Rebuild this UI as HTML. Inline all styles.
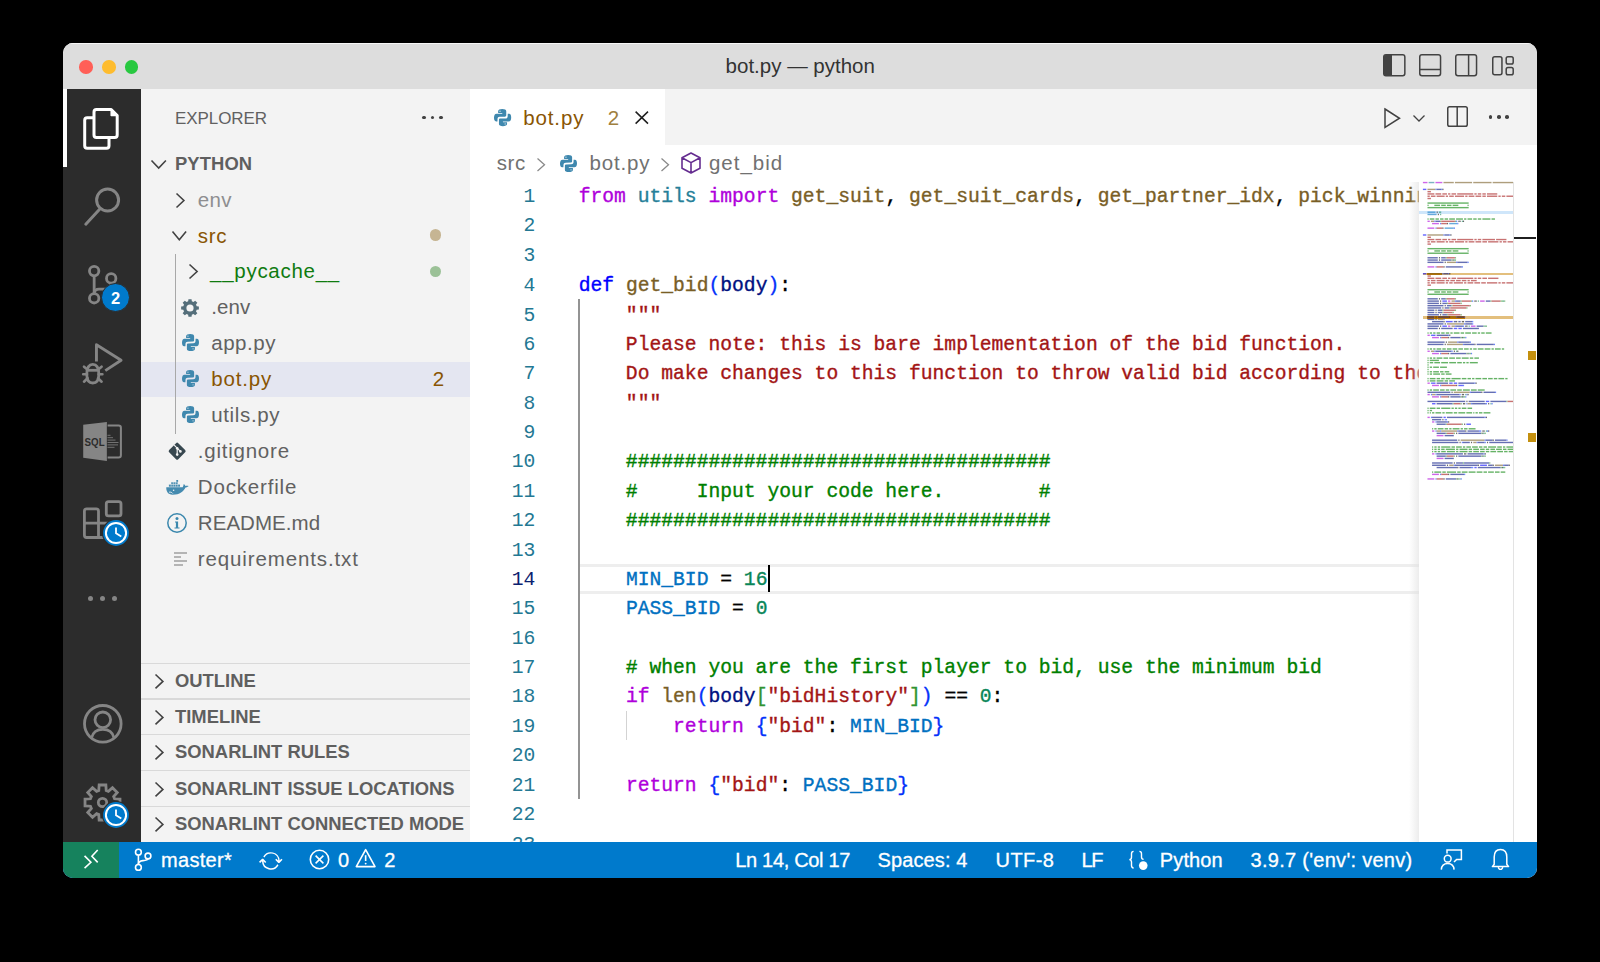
<!DOCTYPE html>
<html><head><meta charset="utf-8">
<style>
*{margin:0;padding:0;box-sizing:border-box}
html,body{width:1600px;height:962px;background:#000;overflow:hidden}
body{font-family:"Liberation Sans",sans-serif;position:relative}
.a{position:absolute}
.win{position:absolute;left:63px;top:43px;width:1474px;height:835px;border-radius:10px;overflow:hidden;background:#fff}
.pg{position:absolute;left:-63px;top:-43px;width:1600px;height:962px}
.t{position:absolute;white-space:pre;line-height:1}
.code{font-family:"Liberation Mono",monospace;white-space:pre;position:absolute}
svg{position:absolute;overflow:visible}
.k{color:#af00db}.m{color:#267f99}.f{color:#795e26}.d{color:#0000ff}.b1{color:#0431fa}.b2{color:#319331}.b3{color:#7b3814}
.v{color:#001080}.s{color:#a31515}.c{color:#008000}.n{color:#098658}.cn{color:#0070c1}.o{color:#000}
</style></head><body>
<div class="win"><div class="pg">

<div class="a" style="left:63px;top:43px;width:1474px;height:46px;background:#dddddd;"></div>
<div class="a" style="left:63px;top:89px;width:78px;height:753px;background:#2c2c2c;"></div>
<div class="a" style="left:141px;top:89px;width:329px;height:753px;background:#f3f3f3;"></div>
<div class="a" style="left:470px;top:89px;width:1067px;height:753px;background:#ffffff;"></div>
<div class="a" style="left:470px;top:89px;width:1067px;height:56px;background:#f3f3f3;"></div>
<div class="a" style="left:470px;top:89px;width:195px;height:56px;background:#ffffff;"></div>
<div class="a" style="left:63px;top:43px;width:1474px;height:1.2px;background:#f7f7f7;"></div>
<div class="a" style="left:79.35px;top:60.05px;width:13.5px;height:13.5px;border-radius:50%;background:#ff5f57"></div>
<div class="a" style="left:102.15px;top:60.05px;width:13.5px;height:13.5px;border-radius:50%;background:#febc2e"></div>
<div class="a" style="left:124.65px;top:60.05px;width:13.5px;height:13.5px;border-radius:50%;background:#28c840"></div>
<div class="t" style="left:725.60px;top:55.75px;font-size:20.5px;color:#333333;font-family:'Liberation Sans';">bot.py — python</div>
<div class="a" style="left:578px;top:564px;width:841px;height:30px;border:3px solid #eeeeee;border-right:none;border-left:none"></div>
<div class="a" style="left:577.5px;top:299.0px;width:2px;height:499.79999999999995px;background:#939393;"></div>
<div class="a" style="left:625.5px;top:710.5999999999999px;width:1.3px;height:29.43px;background:#d3d3d3;"></div>
<div class="code" style="left:578.70px;top:183.160px;font-size:19.6635px;line-height:27.3767px;color:#000;transform:scaleY(1.075);transform-origin:0 0;-webkit-text-stroke:0.35px currentColor"><span class="k">from</span><span class="o"> </span><span class="m">utils</span><span class="o"> </span><span class="k">import</span><span class="o"> </span><span class="f">get_suit</span><span class="o">, </span><span class="f">get_suit_cards</span><span class="o">, </span><span class="f">get_partner_idx</span><span class="o">, </span><span class="f">pick_winning_card_idx</span><span class="o">, </span><span class="f">is_high</span>
 
 
<span class="d">def</span><span class="o"> </span><span class="f">get_bid</span><span class="b1">(</span><span class="v">body</span><span class="b1">)</span><span class="o">:</span>
<span class="s">    &quot;&quot;&quot;</span>
<span class="s">    Please note: this is bare implementation of the bid function.</span>
<span class="s">    Do make changes to this function to throw valid bid according to the context of the game.</span>
<span class="s">    &quot;&quot;&quot;</span>
 
<span class="c">    ####################################</span>
<span class="c">    #     Input your code here.        #</span>
<span class="c">    ####################################</span>
 
<span class="o">    </span><span class="cn">MIN_BID</span><span class="o"> = </span><span class="n">16</span>
<span class="o">    </span><span class="cn">PASS_BID</span><span class="o"> = </span><span class="n">0</span>
 
<span class="c">    # when you are the first player to bid, use the minimum bid</span>
<span class="o">    </span><span class="k">if</span><span class="o"> </span><span class="f">len</span><span class="b1">(</span><span class="v">body</span><span class="b2">[</span><span class="s">&quot;bidHistory&quot;</span><span class="b2">]</span><span class="b1">)</span><span class="o"> == </span><span class="n">0</span><span class="o">:</span>
<span class="o">        </span><span class="k">return</span><span class="o"> </span><span class="b1">{</span><span class="s">&quot;bid&quot;</span><span class="o">: </span><span class="cn">MIN_BID</span><span class="b1">}</span>
 
<span class="o">    </span><span class="k">return</span><span class="o"> </span><span class="b1">{</span><span class="s">&quot;bid&quot;</span><span class="o">: </span><span class="cn">PASS_BID</span><span class="b1">}</span>
 
 </div>
<div class="code" style="left:469.3px;width:66px;text-align:right;top:183.160px;font-size:19.6635px;line-height:27.3767px;transform:scaleY(1.075);transform-origin:0 0"><span style="color:#237893">1</span>
<span style="color:#237893">2</span>
<span style="color:#237893">3</span>
<span style="color:#237893">4</span>
<span style="color:#237893">5</span>
<span style="color:#237893">6</span>
<span style="color:#237893">7</span>
<span style="color:#237893">8</span>
<span style="color:#237893">9</span>
<span style="color:#237893">10</span>
<span style="color:#237893">11</span>
<span style="color:#237893">12</span>
<span style="color:#237893">13</span>
<span style="color:#0b216f">14</span>
<span style="color:#237893">15</span>
<span style="color:#237893">16</span>
<span style="color:#237893">17</span>
<span style="color:#237893">18</span>
<span style="color:#237893">19</span>
<span style="color:#237893">20</span>
<span style="color:#237893">21</span>
<span style="color:#237893">22</span>
<span style="color:#237893">23</span></div>
<div class="a" style="left:767.6px;top:564.6px;width:2px;height:27.43px;background:#000000;"></div>
<div class="t" style="left:175.00px;top:109.61px;font-size:17px;color:#616161;letter-spacing:-0.073px;font-family:'Liberation Sans';">EXPLORER</div>
<div class="a" style="left:422.45px;top:115.55px;width:3.5px;height:3.5px;border-radius:50%;background:#424242"></div>
<div class="a" style="left:430.85px;top:115.55px;width:3.5px;height:3.5px;border-radius:50%;background:#424242"></div>
<div class="a" style="left:439.25px;top:115.55px;width:3.5px;height:3.5px;border-radius:50%;background:#424242"></div>
<svg style="left:150.6px;top:160.2px;" width="15.4" height="8.6" viewBox="0 0 15.4 8.6"><path d="M0.5 0.5 L7.7 8.1 L14.9 0.5" fill="none" stroke="#424242" stroke-width="1.6"/></svg>
<div class="t" style="left:175.00px;top:154.72px;font-size:18.4px;color:#5f5f5f;font-weight:bold;letter-spacing:0.088px;font-family:'Liberation Sans';">PYTHON</div>
<div class="a" style="left:141px;top:361.9px;width:329px;height:35.4px;background:#e4e6f1;"></div>
<div class="a" style="left:174.5px;top:253.6px;width:1.2px;height:180.1px;background:#a8a8a8;"></div>
<svg style="left:176.2px;top:193.2px;" width="8.4" height="15" viewBox="0 0 8.4 15"><path d="M0.5 0.5 L7.9 7.5 L0.5 14.5" fill="none" stroke="#424242" stroke-width="1.6"/></svg>
<div class="t" style="left:197.80px;top:189.65px;font-size:20.5px;color:#8e8e90;letter-spacing:0.316px;font-family:'Liberation Sans';">env</div>
<svg style="left:172px;top:231.3px;" width="14.6" height="9.2" viewBox="0 0 14.6 9.2"><path d="M0.5 0.5 L7.3 8.7 L14.1 0.5" fill="none" stroke="#424242" stroke-width="1.6"/></svg>
<div class="t" style="left:197.80px;top:225.55px;font-size:20.5px;color:#895503;letter-spacing:0.658px;font-family:'Liberation Sans';">src</div>
<div class="a" style="left:429.80px;top:229.25px;width:11.6px;height:11.6px;border-radius:50%;background:#c6b593"></div>
<svg style="left:189px;top:264.2px;" width="8.6" height="15" viewBox="0 0 8.6 15"><path d="M0.5 0.5 L8.1 7.5 L0.5 14.5" fill="none" stroke="#424242" stroke-width="1.6"/></svg>
<div class="t" style="left:210.00px;top:261.45px;font-size:20.5px;color:#0f7b0f;letter-spacing:0.731px;font-family:'Liberation Sans';">__pycache__</div>
<div class="a" style="left:429.80px;top:265.50px;width:11.6px;height:11.6px;border-radius:50%;background:#9bc197"></div>
<svg style="left:181.2px;top:298.5px;" width="18" height="18" viewBox="0 0 18 18"><polygon points="7.16,2.35 7.45,0.13 10.55,0.13 10.84,2.35 12.40,3.00 14.18,1.64 16.36,3.82 15.00,5.60 15.65,7.16 17.87,7.45 17.87,10.55 15.65,10.84 15.00,12.40 16.36,14.18 14.18,16.36 12.40,15.00 10.84,15.65 10.55,17.87 7.45,17.87 7.16,15.65 5.60,15.00 3.82,16.36 1.64,14.18 3.00,12.40 2.35,10.84 0.13,10.55 0.13,7.45 2.35,7.16 3.00,5.60 1.64,3.82 3.82,1.64 5.60,3.00" fill="#546e7a"/><circle cx="9" cy="9" r="3.6" fill="#f3f3f3"/></svg>
<div class="t" style="left:211.20px;top:297.35px;font-size:20.5px;color:#616161;letter-spacing:0.138px;font-family:'Liberation Sans';">.env</div>
<svg style="left:181.9px;top:334.0px;" width="17" height="17" viewBox="0 0 16 16"><path d="M3.85 2 C3.85 0.7 5.5 0 7.7 0 C10 0 11.4 0.7 11.4 2 L11.4 5.9 C11.4 6.6 10.8 7.1 10.1 7.1 L5.3 7.2 C4.1 7.2 3.3 8 3.3 9.1 L3.2 11.6 L2 11.6 C0.6 11.6 0 10 0 8.2 C0 5.9 0.8 4.4 2.4 4.4 L7.7 4.4 L7.7 3.7 L3.85 3.7 Z" fill="#3f88ae"/><circle cx="5.6" cy="2.1" r="0.6" fill="#f3f3f3" opacity="0.8"/><g transform="rotate(180 8 8)"><path d="M3.85 2 C3.85 0.7 5.5 0 7.7 0 C10 0 11.4 0.7 11.4 2 L11.4 5.9 C11.4 6.6 10.8 7.1 10.1 7.1 L5.3 7.2 C4.1 7.2 3.3 8 3.3 9.1 L3.2 11.6 L2 11.6 C0.6 11.6 0 10 0 8.2 C0 5.9 0.8 4.4 2.4 4.4 L7.7 4.4 L7.7 3.7 L3.85 3.7 Z" fill="#3f88ae"/><circle cx="5.6" cy="2.1" r="0.6" fill="#f3f3f3" opacity="0.8"/></g></svg>
<div class="t" style="left:211.20px;top:333.25px;font-size:20.5px;color:#616161;letter-spacing:0.542px;font-family:'Liberation Sans';">app.py</div>
<svg style="left:181.9px;top:369.9px;" width="17" height="17" viewBox="0 0 16 16"><path d="M3.85 2 C3.85 0.7 5.5 0 7.7 0 C10 0 11.4 0.7 11.4 2 L11.4 5.9 C11.4 6.6 10.8 7.1 10.1 7.1 L5.3 7.2 C4.1 7.2 3.3 8 3.3 9.1 L3.2 11.6 L2 11.6 C0.6 11.6 0 10 0 8.2 C0 5.9 0.8 4.4 2.4 4.4 L7.7 4.4 L7.7 3.7 L3.85 3.7 Z" fill="#3f88ae"/><circle cx="5.6" cy="2.1" r="0.6" fill="#e4e6f1" opacity="0.8"/><g transform="rotate(180 8 8)"><path d="M3.85 2 C3.85 0.7 5.5 0 7.7 0 C10 0 11.4 0.7 11.4 2 L11.4 5.9 C11.4 6.6 10.8 7.1 10.1 7.1 L5.3 7.2 C4.1 7.2 3.3 8 3.3 9.1 L3.2 11.6 L2 11.6 C0.6 11.6 0 10 0 8.2 C0 5.9 0.8 4.4 2.4 4.4 L7.7 4.4 L7.7 3.7 L3.85 3.7 Z" fill="#3f88ae"/><circle cx="5.6" cy="2.1" r="0.6" fill="#e4e6f1" opacity="0.8"/></g></svg>
<div class="t" style="left:211.20px;top:369.15px;font-size:20.5px;color:#895503;letter-spacing:0.859px;font-family:'Liberation Sans';">bot.py</div>
<div class="t" style="left:432.80px;top:369.15px;font-size:20.5px;color:#895503;letter-spacing:-0.901px;font-family:'Liberation Sans';">2</div>
<svg style="left:181.9px;top:405.8px;" width="17" height="17" viewBox="0 0 16 16"><path d="M3.85 2 C3.85 0.7 5.5 0 7.7 0 C10 0 11.4 0.7 11.4 2 L11.4 5.9 C11.4 6.6 10.8 7.1 10.1 7.1 L5.3 7.2 C4.1 7.2 3.3 8 3.3 9.1 L3.2 11.6 L2 11.6 C0.6 11.6 0 10 0 8.2 C0 5.9 0.8 4.4 2.4 4.4 L7.7 4.4 L7.7 3.7 L3.85 3.7 Z" fill="#3f88ae"/><circle cx="5.6" cy="2.1" r="0.6" fill="#f3f3f3" opacity="0.8"/><g transform="rotate(180 8 8)"><path d="M3.85 2 C3.85 0.7 5.5 0 7.7 0 C10 0 11.4 0.7 11.4 2 L11.4 5.9 C11.4 6.6 10.8 7.1 10.1 7.1 L5.3 7.2 C4.1 7.2 3.3 8 3.3 9.1 L3.2 11.6 L2 11.6 C0.6 11.6 0 10 0 8.2 C0 5.9 0.8 4.4 2.4 4.4 L7.7 4.4 L7.7 3.7 L3.85 3.7 Z" fill="#3f88ae"/><circle cx="5.6" cy="2.1" r="0.6" fill="#f3f3f3" opacity="0.8"/></g></svg>
<div class="t" style="left:211.20px;top:405.05px;font-size:20.5px;color:#616161;letter-spacing:0.65px;font-family:'Liberation Sans';">utils.py</div>
<svg style="left:167.9px;top:441.8px;" width="18.3" height="18.3" viewBox="0 0 18.3 18.3"><rect x="2.7" y="2.7" width="12.9" height="12.9" rx="1.6" transform="rotate(45 9.15 9.15)" fill="#37474f"/><path d="M6.2 3.2 L9.2 6.2 M9.2 6.2 L9.2 12.6 M9.2 6.2 L12.4 9.4" stroke="#f3f3f3" stroke-width="1.2" fill="none"/><circle cx="9.2" cy="6.2" r="1.3" fill="#f3f3f3"/><circle cx="9.2" cy="12.6" r="1.3" fill="#f3f3f3"/><circle cx="12.4" cy="9.4" r="1.3" fill="#f3f3f3"/></svg>
<div class="t" style="left:197.80px;top:440.95px;font-size:20.5px;color:#616161;letter-spacing:0.767px;font-family:'Liberation Sans';">.gitignore</div>
<svg style="left:166.1px;top:479.8px;" width="22.7" height="14.7" viewBox="0 0 22.7 14.7"><path d="M0.3 7.2 L16.7 7.2 C17.3 6.3 17.4 5.2 17.8 4 C18.8 4.6 19.3 5.3 19.4 5.9 C20.3 5.7 21.5 5.8 22.7 5.9 C21.5 6.9 20.5 7.3 19.5 7.5 C17.5 11.5 14 14.7 6.6 14.7 C2 14.7 0 11 0.3 7.2 Z" fill="#458bb0"/><rect x="2.9" y="4.4" width="11.1" height="2.3" fill="#458bb0"/><rect x="5.2" y="2.1" width="6.5" height="2.1" fill="#458bb0"/><rect x="10.3" y="0" width="1.8" height="2" fill="#458bb0"/><path d="M5.1 4.3 V6.8 M7.3 4.3 V6.8 M9.5 4.3 V6.8 M11.8 4.3 V6.8 M7.4 2 V4.3 M9.5 2 V4.3 M2.8 4.3 H14.1 M5.1 2.05 H11.8" stroke="#f3f3f3" stroke-width="0.45"/><circle cx="7.6" cy="10.3" r="0.8" fill="#f3f3f3"/><path d="M3 12.2 C4.5 11.8 6 12.4 6.8 13.6" stroke="#e8eef2" stroke-width="0.9" fill="none"/></svg>
<div class="t" style="left:197.80px;top:476.85px;font-size:20.5px;color:#616161;letter-spacing:0.826px;font-family:'Liberation Sans';">Dockerfile</div>
<svg style="left:167.2px;top:512.8px;" width="20" height="20" viewBox="0 0 20 20"><circle cx="10" cy="10" r="9.2" fill="none" stroke="#3a87ad" stroke-width="1.5"/><circle cx="10" cy="5.5" r="1.5" fill="#3a87ad"/><path d="M8 8.5 L11.1 8.5 L11.1 14.4 L12.5 14.4 L12.5 15.6 L7.5 15.6 L7.5 14.4 L8.9 14.4 L8.9 9.6 L8 9.6 Z" fill="#3a87ad"/></svg>
<div class="t" style="left:197.80px;top:512.75px;font-size:20.5px;color:#616161;letter-spacing:0.058px;font-family:'Liberation Sans';">README.md</div>
<div class="a" style="left:174.1px;top:552.1px;width:12.7px;height:1.6px;background:#b4b4b4;"></div>
<div class="a" style="left:174.1px;top:556.25px;width:6.8px;height:1.6px;background:#b4b4b4;"></div>
<div class="a" style="left:174.1px;top:560.2px;width:12.7px;height:1.6px;background:#b4b4b4;"></div>
<div class="a" style="left:174.1px;top:564.35px;width:9.2px;height:1.6px;background:#b4b4b4;"></div>
<div class="t" style="left:197.80px;top:548.65px;font-size:20.5px;color:#616161;letter-spacing:0.877px;font-family:'Liberation Sans';">requirements.txt</div>
<div class="a" style="left:141px;top:662.8px;width:329px;height:1.3px;background:#d9d9d9;"></div>
<svg style="left:154.6px;top:674.1999999999999px;" width="8.4" height="14.8" viewBox="0 0 8.4 14.8"><path d="M0.5 0.5 L7.9 7.4 L0.5 14.3" fill="none" stroke="#424242" stroke-width="1.6"/></svg>
<div class="t" style="left:175.00px;top:672.22px;font-size:18.4px;color:#5f5f5f;font-weight:bold;font-family:'Liberation Sans';">OUTLINE</div>
<div class="a" style="left:141px;top:698.3px;width:329px;height:1.3px;background:#d9d9d9;"></div>
<svg style="left:154.6px;top:709.6999999999999px;" width="8.4" height="14.8" viewBox="0 0 8.4 14.8"><path d="M0.5 0.5 L7.9 7.4 L0.5 14.3" fill="none" stroke="#424242" stroke-width="1.6"/></svg>
<div class="t" style="left:175.00px;top:707.72px;font-size:18.4px;color:#5f5f5f;font-weight:bold;font-family:'Liberation Sans';">TIMELINE</div>
<div class="a" style="left:141px;top:734.0px;width:329px;height:1.3px;background:#d9d9d9;"></div>
<svg style="left:154.6px;top:745.4px;" width="8.4" height="14.8" viewBox="0 0 8.4 14.8"><path d="M0.5 0.5 L7.9 7.4 L0.5 14.3" fill="none" stroke="#424242" stroke-width="1.6"/></svg>
<div class="t" style="left:175.00px;top:743.42px;font-size:18.4px;color:#5f5f5f;font-weight:bold;font-family:'Liberation Sans';">SONARLINT RULES</div>
<div class="a" style="left:141px;top:770.1px;width:329px;height:1.3px;background:#d9d9d9;"></div>
<svg style="left:154.6px;top:781.5px;" width="8.4" height="14.8" viewBox="0 0 8.4 14.8"><path d="M0.5 0.5 L7.9 7.4 L0.5 14.3" fill="none" stroke="#424242" stroke-width="1.6"/></svg>
<div class="t" style="left:175.00px;top:779.52px;font-size:18.4px;color:#5f5f5f;font-weight:bold;font-family:'Liberation Sans';">SONARLINT ISSUE LOCATIONS</div>
<div class="a" style="left:141px;top:806.0px;width:329px;height:1.3px;background:#d9d9d9;"></div>
<svg style="left:154.6px;top:817.4px;" width="8.4" height="14.8" viewBox="0 0 8.4 14.8"><path d="M0.5 0.5 L7.9 7.4 L0.5 14.3" fill="none" stroke="#424242" stroke-width="1.6"/></svg>
<div class="t" style="left:175.00px;top:815.42px;font-size:18.4px;color:#5f5f5f;font-weight:bold;font-family:'Liberation Sans';">SONARLINT CONNECTED MODE</div>
<svg style="left:493.9px;top:108.8px;" width="17.2" height="17.2" viewBox="0 0 16 16"><path d="M3.85 2 C3.85 0.7 5.5 0 7.7 0 C10 0 11.4 0.7 11.4 2 L11.4 5.9 C11.4 6.6 10.8 7.1 10.1 7.1 L5.3 7.2 C4.1 7.2 3.3 8 3.3 9.1 L3.2 11.6 L2 11.6 C0.6 11.6 0 10 0 8.2 C0 5.9 0.8 4.4 2.4 4.4 L7.7 4.4 L7.7 3.7 L3.85 3.7 Z" fill="#3f88ae"/><circle cx="5.6" cy="2.1" r="0.6" fill="#ffffff" opacity="0.8"/><g transform="rotate(180 8 8)"><path d="M3.85 2 C3.85 0.7 5.5 0 7.7 0 C10 0 11.4 0.7 11.4 2 L11.4 5.9 C11.4 6.6 10.8 7.1 10.1 7.1 L5.3 7.2 C4.1 7.2 3.3 8 3.3 9.1 L3.2 11.6 L2 11.6 C0.6 11.6 0 10 0 8.2 C0 5.9 0.8 4.4 2.4 4.4 L7.7 4.4 L7.7 3.7 L3.85 3.7 Z" fill="#3f88ae"/><circle cx="5.6" cy="2.1" r="0.6" fill="#ffffff" opacity="0.8"/></g></svg>
<div class="t" style="left:523.30px;top:107.65px;font-size:20.5px;color:#895503;letter-spacing:0.859px;font-family:'Liberation Sans';">bot.py</div>
<div class="t" style="left:607.80px;top:107.65px;font-size:20.5px;color:#a0803e;letter-spacing:-1.001px;font-family:'Liberation Sans';">2</div>
<svg style="left:635px;top:110.7px;" width="13.6" height="13.2" viewBox="0 0 13.6 13.2"><path d="M0.6 0.6 L13 12.6 M13 0.6 L0.6 12.6" stroke="#1f1f1f" stroke-width="1.5" fill="none"/></svg>
<svg style="left:1384px;top:108px;" width="16.5" height="20.5" viewBox="0 0 16.5 20.5"><path d="M1 1 L15.5 10.25 L1 19.5 Z" fill="none" stroke="#424242" stroke-width="1.5" stroke-linejoin="miter"/></svg>
<svg style="left:1413px;top:114.5px;" width="12" height="6.5" viewBox="0 0 12 6.5"><path d="M0.5 0.5 L6 6 L11.5 0.5" fill="none" stroke="#424242" stroke-width="1.3"/></svg>
<svg style="left:1447px;top:106px;" width="21" height="21" viewBox="0 0 21 21"><rect x="0.75" y="0.75" width="19.5" height="19.5" rx="1.8" fill="none" stroke="#424242" stroke-width="1.5"/><path d="M10.2 0.75 V20.25" stroke="#424242" stroke-width="1.5"/></svg>
<div class="a" style="left:1488.85px;top:115.45px;width:3.5px;height:3.5px;border-radius:50%;background:#424242"></div>
<div class="a" style="left:1497.00px;top:115.45px;width:3.5px;height:3.5px;border-radius:50%;background:#424242"></div>
<div class="a" style="left:1505.25px;top:115.45px;width:3.5px;height:3.5px;border-radius:50%;background:#424242"></div>
<div class="t" style="left:496.80px;top:153.35px;font-size:20.5px;color:#717171;letter-spacing:0.524px;font-family:'Liberation Sans';">src</div>
<svg style="left:536.6px;top:158.3px;" width="8" height="13.4" viewBox="0 0 8 13.4"><path d="M0.5 0.5 L7.5 6.7 L0.5 12.9" fill="none" stroke="#8a8a8a" stroke-width="1.3"/></svg>
<svg style="left:560.3px;top:155.0px;" width="17.0" height="17.0" viewBox="0 0 16 16"><path d="M3.85 2 C3.85 0.7 5.5 0 7.7 0 C10 0 11.4 0.7 11.4 2 L11.4 5.9 C11.4 6.6 10.8 7.1 10.1 7.1 L5.3 7.2 C4.1 7.2 3.3 8 3.3 9.1 L3.2 11.6 L2 11.6 C0.6 11.6 0 10 0 8.2 C0 5.9 0.8 4.4 2.4 4.4 L7.7 4.4 L7.7 3.7 L3.85 3.7 Z" fill="#3f88ae"/><circle cx="5.6" cy="2.1" r="0.6" fill="#ffffff" opacity="0.8"/><g transform="rotate(180 8 8)"><path d="M3.85 2 C3.85 0.7 5.5 0 7.7 0 C10 0 11.4 0.7 11.4 2 L11.4 5.9 C11.4 6.6 10.8 7.1 10.1 7.1 L5.3 7.2 C4.1 7.2 3.3 8 3.3 9.1 L3.2 11.6 L2 11.6 C0.6 11.6 0 10 0 8.2 C0 5.9 0.8 4.4 2.4 4.4 L7.7 4.4 L7.7 3.7 L3.85 3.7 Z" fill="#3f88ae"/><circle cx="5.6" cy="2.1" r="0.6" fill="#ffffff" opacity="0.8"/></g></svg>
<div class="t" style="left:589.60px;top:153.35px;font-size:20.5px;color:#717171;letter-spacing:0.809px;font-family:'Liberation Sans';">bot.py</div>
<svg style="left:661px;top:158.3px;" width="8" height="13.4" viewBox="0 0 8 13.4"><path d="M0.5 0.5 L7.5 6.7 L0.5 12.9" fill="none" stroke="#8a8a8a" stroke-width="1.3"/></svg>
<svg style="left:680.7px;top:151.9px;" width="20" height="22" viewBox="0 0 20 22"><path d="M10 1 L19 5.8 L19 16.2 L10 21 L1 16.2 L1 5.8 Z M1 5.8 L10 10.6 L19 5.8 M10 10.6 L10 21" fill="none" stroke="#652d90" stroke-width="1.6" stroke-linejoin="round"/></svg>
<div class="t" style="left:708.90px;top:153.35px;font-size:20.5px;color:#717171;letter-spacing:1.021px;font-family:'Liberation Sans';">get_bid</div>
<svg style="left:1383px;top:54.4px;" width="22.6" height="22.5" viewBox="0 0 22.6 22.5"><rect x="0.75" y="0.75" width="21.1" height="21" rx="2.2" fill="none" stroke="#424242" stroke-width="1.5"/><path d="M1 2.5 Q1 1 2.5 1 L9 1 L9 21.5 L2.5 21.5 Q1 21.5 1 20 Z" fill="#424242"/></svg>
<svg style="left:1419px;top:54.4px;" width="22.3" height="22.5" viewBox="0 0 22.3 22.5"><rect x="0.75" y="0.75" width="20.8" height="21" rx="2.2" fill="none" stroke="#424242" stroke-width="1.5"/><path d="M0.75 15.6 H21.5" stroke="#424242" stroke-width="1.5"/></svg>
<svg style="left:1455px;top:54.4px;" width="22.3" height="22.5" viewBox="0 0 22.3 22.5"><rect x="0.75" y="0.75" width="20.8" height="21" rx="2.2" fill="none" stroke="#424242" stroke-width="1.5"/><path d="M13.6 0.75 V21.5" stroke="#424242" stroke-width="1.5"/></svg>
<svg style="left:1492px;top:56px;" width="22" height="19.5" viewBox="0 0 22 19.5"><rect x="0.75" y="0.75" width="9.2" height="18" rx="2" fill="none" stroke="#424242" stroke-width="1.5"/><rect x="14.2" y="0.75" width="7" height="7.2" rx="1.8" fill="none" stroke="#424242" stroke-width="1.5"/><rect x="14.2" y="11.6" width="7" height="7.2" rx="1.8" fill="none" stroke="#424242" stroke-width="1.5"/></svg>
<div class="a" style="left:63px;top:89px;width:4px;height:78px;background:#ffffff;"></div>
<svg style="left:80px;top:104px;" width="46" height="50" viewBox="80 104 46 50"><path d="M94 117.7 H87.2 Q84.7 117.7 84.7 120.2 V145.7 Q84.7 148.2 87.2 148.2 H106.5 Q109 148.2 109 145.7 V138.5" fill="none" stroke="#fff" stroke-width="3"/><path d="M111.2 109.5 H96.5 Q94 109.5 94 112 V135 Q94 137.5 96.5 137.5 H114.7 Q117.2 137.5 117.2 135 V115.5 Z" fill="none" stroke="#fff" stroke-width="3" stroke-linejoin="round"/><path d="M111.2 109.5 V115.5 H117.2 Z" fill="#fff" stroke="#fff" stroke-width="1.5" stroke-linejoin="round"/></svg>
<svg style="left:80px;top:180px;" width="50" height="50" viewBox="80 180 50 50"><circle cx="107.6" cy="200" r="11" fill="none" stroke="#858585" stroke-width="3"/><path d="M99.6 209.3 L85.8 224.2" stroke="#858585" stroke-width="3" stroke-linecap="round"/></svg>
<svg style="left:80px;top:258px;" width="50" height="50" viewBox="80 258 50 50"><circle cx="94.16" cy="271.1" r="4.7" fill="none" stroke="#858585" stroke-width="2.8"/><circle cx="94.16" cy="298.3" r="4.7" fill="none" stroke="#858585" stroke-width="2.8"/><circle cx="111.2" cy="278.4" r="4.7" fill="none" stroke="#858585" stroke-width="2.8"/><path d="M94.16 275.8 V293.6" stroke="#858585" stroke-width="2.8"/><path d="M94.16 293 C94.5 290.5 96 289.1 99 289.1 H105 C108.5 289.1 110.5 286.5 110.8 283.1" fill="none" stroke="#858585" stroke-width="2.8"/></svg>
<div class="a" style="left:101.00px;top:283.00px;width:29.40px;height:29.40px;border-radius:50%;background:#007acc;border:1.5px solid #2c2c2c"></div>
<div class="t" style="left:111.10px;top:289.53px;font-size:16.5px;color:#ffffff;font-weight:bold;font-family:'Liberation Sans';">2</div>
<svg style="left:78px;top:336px;" width="50" height="50" viewBox="78 336 50 50"><path d="M96.45 361.5 V344.8 L121.1 360.2 L105.3 370.6" fill="none" stroke="#858585" stroke-width="2.9" stroke-linejoin="round"/><path d="M86.8 374.5 C86.8 368 89 364.3 92.8 364.3 C96.6 364.3 98.8 368 98.8 374.5 C98.8 380 96.5 383 92.8 383 C89.1 383 86.8 380 86.8 374.5 Z" fill="none" stroke="#858585" stroke-width="2.8"/><path d="M86.8 370.3 H98.8" stroke="#858585" stroke-width="2.8"/><path d="M84 366.7 L87.4 369.6 M83.2 374.3 H87 M84 381.7 L87.6 378.2 M101.6 366.7 L98.2 369.6 M102.4 374.3 H98.6 M101.6 381.7 L98 378.2" stroke="#858585" stroke-width="2.6" stroke-linecap="round"/></svg>
<svg style="left:78px;top:416px;" width="50" height="50" viewBox="78 416 50 50"><path d="M107.6 425.4 H118.6 Q120.9 425.4 120.9 427.7 V455.3 Q120.9 457.6 118.6 457.6 H107.6" fill="none" stroke="#858585" stroke-width="2"/><path d="M83.2 424.8 L106.85 422 V461 L83.2 457.8 Z" fill="#858585"/><text x="84.6" y="446.2" font-family="Liberation Sans" font-weight="bold" font-size="11.5" fill="#2c2c2c" textLength="20" lengthAdjust="spacingAndGlyphs">SQL</text><path d="M107.5 435.3 H110.5 M107.5 437.7 H113 M107.5 440.1 H115.5 M107.5 442.5 H118.5 M107.5 444.9 H118 M107.5 447.3 H114.5" stroke="#858585" stroke-width="1" opacity="0.8"/></svg>
<svg style="left:78px;top:494px;" width="54" height="54" viewBox="78 494 54 54"><path d="M98.5 523.2 V537.5 H86.6 Q84.4 537.5 84.4 535.3 V511.1 Q84.4 508.9 86.6 508.9 H96.3 Q98.5 508.9 98.5 511.1 V523.2 H112.8 V537.5 H98.5 M84.4 523.2 H98.5" fill="none" stroke="#858585" stroke-width="2.8"/><rect x="106.3" y="501.6" width="14.7" height="14.3" rx="2.2" fill="none" stroke="#858585" stroke-width="2.8"/></svg>
<svg style="left:100.7px;top:517.7px;" width="30" height="30" viewBox="0 0 30 30"><circle cx="15" cy="15" r="14" fill="#2c2c2c"/><circle cx="15" cy="15" r="12.9" fill="#007acc"/><circle cx="15" cy="15" r="10.1" fill="none" stroke="#fff" stroke-width="2"/><path d="M15 9.4 V15.3 L20.3 18.6" fill="none" stroke="#fff" stroke-width="1.8"/></svg>
<div class="a" style="left:87.65px;top:595.85px;width:5.5px;height:5.5px;border-radius:50%;background:#858585"></div>
<div class="a" style="left:99.65px;top:595.85px;width:5.5px;height:5.5px;border-radius:50%;background:#858585"></div>
<div class="a" style="left:111.85px;top:595.85px;width:5.5px;height:5.5px;border-radius:50%;background:#858585"></div>
<svg style="left:78px;top:698px;" width="50" height="50" viewBox="78 698 50 50"><circle cx="102.8" cy="723.8" r="18.3" fill="none" stroke="#858585" stroke-width="2.8"/><circle cx="102.8" cy="719.8" r="7.8" fill="none" stroke="#858585" stroke-width="2.8"/><path d="M91.6 737.8 C93 731.5 97.5 729.3 102.8 729.3 C108.1 729.3 112.6 731.5 114 737.8" fill="none" stroke="#858585" stroke-width="2.8"/></svg>
<svg style="left:78px;top:778px;" width="54" height="54" viewBox="78 778 54 54"><polygon points="98.78,790.46 99.14,785.02 105.86,785.02 106.22,790.46 108.38,791.36 112.48,787.76 117.24,792.52 113.64,796.62 114.54,798.78 119.98,799.14 119.98,805.86 114.54,806.22 113.64,808.38 117.24,812.48 112.48,817.24 108.38,813.64 106.22,814.54 105.86,819.98 99.14,819.98 98.78,814.54 96.62,813.64 92.52,817.24 87.76,812.48 91.36,808.38 90.46,806.22 85.02,805.86 85.02,799.14 90.46,798.78 91.36,796.62 87.76,792.52 92.52,787.76 96.62,791.36" fill="none" stroke="#858585" stroke-width="2.8" stroke-linejoin="miter"/><circle cx="102.5" cy="802.5" r="4.2" fill="none" stroke="#858585" stroke-width="2.8"/></svg>
<svg style="left:100.7px;top:800.3px;" width="30" height="30" viewBox="0 0 30 30"><circle cx="15" cy="15" r="14" fill="#2c2c2c"/><circle cx="15" cy="15" r="12.9" fill="#007acc"/><circle cx="15" cy="15" r="10.1" fill="none" stroke="#fff" stroke-width="2"/><path d="M15 9.4 V15.3 L20.3 18.6" fill="none" stroke="#fff" stroke-width="1.8"/></svg>
<div class="a" style="left:1419px;top:181.5px;width:118px;height:660.5px;background:#ffffff;"></div>
<div class="a" style="left:1408.7px;top:181.5px;width:10.3px;height:660.5px;background:linear-gradient(to right,rgba(221,221,221,0),rgba(221,221,221,0.55))"></div>
<div class="a" style="left:1419px;top:211.24px;width:94px;height:2.28px;background:#cfe6fb;"></div>
<div class="a" style="left:1422.5px;top:272.6px;width:90.5px;height:2.7px;background:#e3bf7d;"></div>
<div class="a" style="left:1427.48px;top:272.6px;width:14.87px;height:2.7px;background:#c47a00;"></div>
<div class="a" style="left:1422.5px;top:315.92px;width:90.5px;height:2.7px;background:#e3bf7d;"></div>
<div class="a" style="left:1427.48px;top:315.92px;width:37.75px;height:2.7px;background:#c47a00;"></div>
<svg style="left:1419px;top:145px" width="94" height="400" opacity="0.6"><rect x="3.90" y="36.85" width="4.58" height="1.4" fill="#af00db"/><rect x="9.62" y="36.85" width="5.72" height="1.4" fill="#267f99"/><rect x="16.48" y="36.85" width="6.86" height="1.4" fill="#af00db"/><rect x="24.49" y="36.85" width="10.30" height="1.4" fill="#795e26"/><rect x="35.93" y="36.85" width="17.16" height="1.4" fill="#795e26"/><rect x="54.24" y="36.85" width="18.30" height="1.4" fill="#795e26"/><rect x="73.68" y="36.85" width="20.32" height="1.4" fill="#795e26"/><rect x="3.90" y="43.69" width="3.43" height="1.4" fill="#0000ff"/><rect x="8.48" y="43.69" width="8.01" height="1.4" fill="#795e26"/><rect x="16.48" y="43.69" width="1.14" height="1.4" fill="#0431fa"/><rect x="17.63" y="43.69" width="4.58" height="1.4" fill="#001080"/><rect x="22.20" y="43.69" width="1.14" height="1.4" fill="#0431fa"/><rect x="23.35" y="43.69" width="1.14" height="1.4" fill="#000000"/><rect x="8.48" y="45.97" width="3.43" height="1.4" fill="#a31515"/><rect x="8.48" y="48.25" width="6.86" height="1.4" fill="#a31515"/><rect x="16.48" y="48.25" width="5.72" height="1.4" fill="#a31515"/><rect x="23.35" y="48.25" width="4.58" height="1.4" fill="#a31515"/><rect x="29.07" y="48.25" width="2.29" height="1.4" fill="#a31515"/><rect x="32.50" y="48.25" width="4.58" height="1.4" fill="#a31515"/><rect x="38.22" y="48.25" width="16.02" height="1.4" fill="#a31515"/><rect x="55.38" y="48.25" width="2.29" height="1.4" fill="#a31515"/><rect x="58.81" y="48.25" width="3.43" height="1.4" fill="#a31515"/><rect x="63.39" y="48.25" width="3.43" height="1.4" fill="#a31515"/><rect x="67.96" y="48.25" width="10.30" height="1.4" fill="#a31515"/><rect x="8.48" y="50.53" width="2.29" height="1.4" fill="#a31515"/><rect x="11.91" y="50.53" width="4.58" height="1.4" fill="#a31515"/><rect x="17.63" y="50.53" width="8.01" height="1.4" fill="#a31515"/><rect x="26.78" y="50.53" width="2.29" height="1.4" fill="#a31515"/><rect x="30.21" y="50.53" width="4.58" height="1.4" fill="#a31515"/><rect x="35.93" y="50.53" width="9.15" height="1.4" fill="#a31515"/><rect x="46.23" y="50.53" width="2.29" height="1.4" fill="#a31515"/><rect x="49.66" y="50.53" width="5.72" height="1.4" fill="#a31515"/><rect x="56.52" y="50.53" width="5.72" height="1.4" fill="#a31515"/><rect x="63.39" y="50.53" width="3.43" height="1.4" fill="#a31515"/><rect x="67.96" y="50.53" width="10.30" height="1.4" fill="#a31515"/><rect x="79.40" y="50.53" width="2.29" height="1.4" fill="#a31515"/><rect x="82.84" y="50.53" width="3.43" height="1.4" fill="#a31515"/><rect x="87.41" y="50.53" width="6.59" height="1.4" fill="#a31515"/><rect x="8.48" y="52.81" width="3.43" height="1.4" fill="#a31515"/><rect x="8.48" y="57.37" width="41.18" height="1.4" fill="#008000"/><rect x="8.48" y="59.65" width="1.14" height="1.4" fill="#008000"/><rect x="15.34" y="59.65" width="5.72" height="1.4" fill="#008000"/><rect x="22.20" y="59.65" width="4.58" height="1.4" fill="#008000"/><rect x="27.92" y="59.65" width="4.58" height="1.4" fill="#008000"/><rect x="33.64" y="59.65" width="5.72" height="1.4" fill="#008000"/><rect x="48.52" y="59.65" width="1.14" height="1.4" fill="#008000"/><rect x="8.48" y="61.93" width="41.18" height="1.4" fill="#008000"/><rect x="8.48" y="66.49" width="8.01" height="1.4" fill="#0070c1"/><rect x="17.63" y="66.49" width="1.14" height="1.4" fill="#000000"/><rect x="19.92" y="66.49" width="2.29" height="1.4" fill="#098658"/><rect x="8.48" y="68.77" width="9.15" height="1.4" fill="#0070c1"/><rect x="18.77" y="68.77" width="1.14" height="1.4" fill="#000000"/><rect x="21.06" y="68.77" width="1.14" height="1.4" fill="#098658"/><rect x="8.48" y="73.33" width="1.14" height="1.4" fill="#008000"/><rect x="10.76" y="73.33" width="4.58" height="1.4" fill="#008000"/><rect x="16.48" y="73.33" width="3.43" height="1.4" fill="#008000"/><rect x="21.06" y="73.33" width="3.43" height="1.4" fill="#008000"/><rect x="25.64" y="73.33" width="3.43" height="1.4" fill="#008000"/><rect x="30.21" y="73.33" width="5.72" height="1.4" fill="#008000"/><rect x="37.08" y="73.33" width="6.86" height="1.4" fill="#008000"/><rect x="45.08" y="73.33" width="2.29" height="1.4" fill="#008000"/><rect x="48.52" y="73.33" width="4.58" height="1.4" fill="#008000"/><rect x="54.24" y="73.33" width="3.43" height="1.4" fill="#008000"/><rect x="58.81" y="73.33" width="3.43" height="1.4" fill="#008000"/><rect x="63.39" y="73.33" width="8.01" height="1.4" fill="#008000"/><rect x="72.54" y="73.33" width="3.43" height="1.4" fill="#008000"/><rect x="8.48" y="75.61" width="2.29" height="1.4" fill="#af00db"/><rect x="11.91" y="75.61" width="3.43" height="1.4" fill="#795e26"/><rect x="15.34" y="75.61" width="1.14" height="1.4" fill="#0431fa"/><rect x="16.48" y="75.61" width="4.58" height="1.4" fill="#001080"/><rect x="21.06" y="75.61" width="1.14" height="1.4" fill="#319331"/><rect x="22.20" y="75.61" width="13.73" height="1.4" fill="#a31515"/><rect x="35.93" y="75.61" width="1.14" height="1.4" fill="#319331"/><rect x="37.08" y="75.61" width="1.14" height="1.4" fill="#0431fa"/><rect x="39.36" y="75.61" width="1.14" height="1.4" fill="#000000"/><rect x="40.51" y="75.61" width="1.14" height="1.4" fill="#000000"/><rect x="42.80" y="75.61" width="1.14" height="1.4" fill="#098658"/><rect x="43.94" y="75.61" width="1.14" height="1.4" fill="#000000"/><rect x="13.05" y="77.89" width="6.86" height="1.4" fill="#af00db"/><rect x="21.06" y="77.89" width="1.14" height="1.4" fill="#0431fa"/><rect x="22.20" y="77.89" width="5.72" height="1.4" fill="#a31515"/><rect x="27.92" y="77.89" width="1.14" height="1.4" fill="#000000"/><rect x="30.21" y="77.89" width="8.01" height="1.4" fill="#0070c1"/><rect x="38.22" y="77.89" width="1.14" height="1.4" fill="#0431fa"/><rect x="8.48" y="82.45" width="6.86" height="1.4" fill="#af00db"/><rect x="16.48" y="82.45" width="1.14" height="1.4" fill="#0431fa"/><rect x="17.63" y="82.45" width="5.72" height="1.4" fill="#a31515"/><rect x="23.35" y="82.45" width="1.14" height="1.4" fill="#000000"/><rect x="25.64" y="82.45" width="9.15" height="1.4" fill="#0070c1"/><rect x="34.79" y="82.45" width="1.14" height="1.4" fill="#0431fa"/><rect x="3.90" y="89.29" width="3.43" height="1.4" fill="#0000ff"/><rect x="8.48" y="89.29" width="16.02" height="1.4" fill="#795e26"/><rect x="24.49" y="89.29" width="1.14" height="1.4" fill="#0431fa"/><rect x="25.64" y="89.29" width="4.58" height="1.4" fill="#001080"/><rect x="30.21" y="89.29" width="1.14" height="1.4" fill="#0431fa"/><rect x="31.36" y="89.29" width="1.14" height="1.4" fill="#000000"/><rect x="8.48" y="91.57" width="3.43" height="1.4" fill="#a31515"/><rect x="8.48" y="93.85" width="6.86" height="1.4" fill="#a31515"/><rect x="16.48" y="93.85" width="5.72" height="1.4" fill="#a31515"/><rect x="23.35" y="93.85" width="4.58" height="1.4" fill="#a31515"/><rect x="29.07" y="93.85" width="2.29" height="1.4" fill="#a31515"/><rect x="32.50" y="93.85" width="4.58" height="1.4" fill="#a31515"/><rect x="38.22" y="93.85" width="16.02" height="1.4" fill="#a31515"/><rect x="55.38" y="93.85" width="2.29" height="1.4" fill="#a31515"/><rect x="58.81" y="93.85" width="3.43" height="1.4" fill="#a31515"/><rect x="63.39" y="93.85" width="12.58" height="1.4" fill="#a31515"/><rect x="77.12" y="93.85" width="10.30" height="1.4" fill="#a31515"/><rect x="8.48" y="96.13" width="2.29" height="1.4" fill="#a31515"/><rect x="11.91" y="96.13" width="4.58" height="1.4" fill="#a31515"/><rect x="17.63" y="96.13" width="8.01" height="1.4" fill="#a31515"/><rect x="26.78" y="96.13" width="2.29" height="1.4" fill="#a31515"/><rect x="30.21" y="96.13" width="4.58" height="1.4" fill="#a31515"/><rect x="35.93" y="96.13" width="9.15" height="1.4" fill="#a31515"/><rect x="46.23" y="96.13" width="2.29" height="1.4" fill="#a31515"/><rect x="49.66" y="96.13" width="5.72" height="1.4" fill="#a31515"/><rect x="56.52" y="96.13" width="5.72" height="1.4" fill="#a31515"/><rect x="63.39" y="96.13" width="4.58" height="1.4" fill="#a31515"/><rect x="69.11" y="96.13" width="10.30" height="1.4" fill="#a31515"/><rect x="80.55" y="96.13" width="2.29" height="1.4" fill="#a31515"/><rect x="83.98" y="96.13" width="3.43" height="1.4" fill="#a31515"/><rect x="88.56" y="96.13" width="5.44" height="1.4" fill="#a31515"/><rect x="8.48" y="98.41" width="3.43" height="1.4" fill="#a31515"/><rect x="8.48" y="102.97" width="41.18" height="1.4" fill="#008000"/><rect x="8.48" y="105.25" width="1.14" height="1.4" fill="#008000"/><rect x="15.34" y="105.25" width="5.72" height="1.4" fill="#008000"/><rect x="22.20" y="105.25" width="4.58" height="1.4" fill="#008000"/><rect x="27.92" y="105.25" width="4.58" height="1.4" fill="#008000"/><rect x="33.64" y="105.25" width="5.72" height="1.4" fill="#008000"/><rect x="48.52" y="105.25" width="1.14" height="1.4" fill="#008000"/><rect x="8.48" y="107.53" width="41.18" height="1.4" fill="#008000"/><rect x="8.48" y="112.09" width="10.30" height="1.4" fill="#001080"/><rect x="19.92" y="112.09" width="1.14" height="1.4" fill="#000000"/><rect x="22.20" y="112.09" width="4.58" height="1.4" fill="#001080"/><rect x="26.78" y="112.09" width="1.14" height="1.4" fill="#319331"/><rect x="27.92" y="112.09" width="8.01" height="1.4" fill="#a31515"/><rect x="35.93" y="112.09" width="1.14" height="1.4" fill="#319331"/><rect x="8.48" y="114.37" width="10.30" height="1.4" fill="#001080"/><rect x="19.92" y="114.37" width="1.14" height="1.4" fill="#000000"/><rect x="22.20" y="114.37" width="10.30" height="1.4" fill="#001080"/><rect x="32.50" y="114.37" width="1.14" height="1.4" fill="#319331"/><rect x="33.64" y="114.37" width="1.14" height="1.4" fill="#000000"/><rect x="34.79" y="114.37" width="1.14" height="1.4" fill="#098658"/><rect x="35.93" y="114.37" width="1.14" height="1.4" fill="#319331"/><rect x="8.48" y="116.65" width="16.02" height="1.4" fill="#001080"/><rect x="25.64" y="116.65" width="1.14" height="1.4" fill="#000000"/><rect x="27.92" y="116.65" width="9.15" height="1.4" fill="#795e26"/><rect x="37.08" y="116.65" width="1.14" height="1.4" fill="#0431fa"/><rect x="38.22" y="116.65" width="10.30" height="1.4" fill="#001080"/><rect x="48.52" y="116.65" width="1.14" height="1.4" fill="#0431fa"/><rect x="8.48" y="121.21" width="6.86" height="1.4" fill="#af00db"/><rect x="16.48" y="121.21" width="1.14" height="1.4" fill="#0431fa"/><rect x="17.63" y="121.21" width="6.86" height="1.4" fill="#a31515"/><rect x="24.49" y="121.21" width="1.14" height="1.4" fill="#000000"/><rect x="26.78" y="121.21" width="16.02" height="1.4" fill="#001080"/><rect x="42.80" y="121.21" width="1.14" height="1.4" fill="#0431fa"/><rect x="3.90" y="128.05" width="3.43" height="1.4" fill="#0000ff"/><rect x="8.48" y="128.05" width="14.87" height="1.4" fill="#795e26"/><rect x="23.35" y="128.05" width="1.14" height="1.4" fill="#0431fa"/><rect x="24.49" y="128.05" width="4.58" height="1.4" fill="#001080"/><rect x="29.07" y="128.05" width="1.14" height="1.4" fill="#0431fa"/><rect x="30.21" y="128.05" width="1.14" height="1.4" fill="#000000"/><rect x="8.48" y="130.33" width="3.43" height="1.4" fill="#a31515"/><rect x="8.48" y="132.61" width="6.86" height="1.4" fill="#a31515"/><rect x="16.48" y="132.61" width="5.72" height="1.4" fill="#a31515"/><rect x="23.35" y="132.61" width="4.58" height="1.4" fill="#a31515"/><rect x="29.07" y="132.61" width="2.29" height="1.4" fill="#a31515"/><rect x="32.50" y="132.61" width="4.58" height="1.4" fill="#a31515"/><rect x="38.22" y="132.61" width="16.02" height="1.4" fill="#a31515"/><rect x="55.38" y="132.61" width="2.29" height="1.4" fill="#a31515"/><rect x="58.81" y="132.61" width="3.43" height="1.4" fill="#a31515"/><rect x="63.39" y="132.61" width="4.58" height="1.4" fill="#a31515"/><rect x="69.11" y="132.61" width="10.30" height="1.4" fill="#a31515"/><rect x="8.48" y="134.89" width="2.29" height="1.4" fill="#a31515"/><rect x="11.91" y="134.89" width="4.58" height="1.4" fill="#a31515"/><rect x="17.63" y="134.89" width="8.01" height="1.4" fill="#a31515"/><rect x="26.78" y="134.89" width="3.43" height="1.4" fill="#a31515"/><rect x="31.36" y="134.89" width="4.58" height="1.4" fill="#a31515"/><rect x="37.08" y="134.89" width="4.58" height="1.4" fill="#a31515"/><rect x="42.80" y="134.89" width="4.58" height="1.4" fill="#a31515"/><rect x="48.52" y="134.89" width="2.29" height="1.4" fill="#a31515"/><rect x="51.95" y="134.89" width="5.72" height="1.4" fill="#a31515"/><rect x="8.48" y="137.17" width="2.29" height="1.4" fill="#a31515"/><rect x="11.91" y="137.17" width="4.58" height="1.4" fill="#a31515"/><rect x="17.63" y="137.17" width="8.01" height="1.4" fill="#a31515"/><rect x="26.78" y="137.17" width="2.29" height="1.4" fill="#a31515"/><rect x="30.21" y="137.17" width="3.43" height="1.4" fill="#a31515"/><rect x="34.79" y="137.17" width="9.15" height="1.4" fill="#a31515"/><rect x="45.08" y="137.17" width="2.29" height="1.4" fill="#a31515"/><rect x="48.52" y="137.17" width="5.72" height="1.4" fill="#a31515"/><rect x="55.38" y="137.17" width="5.72" height="1.4" fill="#a31515"/><rect x="62.24" y="137.17" width="4.58" height="1.4" fill="#a31515"/><rect x="67.96" y="137.17" width="10.30" height="1.4" fill="#a31515"/><rect x="79.40" y="137.17" width="2.29" height="1.4" fill="#a31515"/><rect x="82.84" y="137.17" width="3.43" height="1.4" fill="#a31515"/><rect x="87.41" y="137.17" width="6.59" height="1.4" fill="#a31515"/><rect x="8.48" y="139.45" width="3.43" height="1.4" fill="#a31515"/><rect x="8.48" y="144.01" width="41.18" height="1.4" fill="#008000"/><rect x="8.48" y="146.29" width="1.14" height="1.4" fill="#008000"/><rect x="15.34" y="146.29" width="5.72" height="1.4" fill="#008000"/><rect x="22.20" y="146.29" width="4.58" height="1.4" fill="#008000"/><rect x="27.92" y="146.29" width="4.58" height="1.4" fill="#008000"/><rect x="33.64" y="146.29" width="5.72" height="1.4" fill="#008000"/><rect x="48.52" y="146.29" width="1.14" height="1.4" fill="#008000"/><rect x="8.48" y="148.57" width="41.18" height="1.4" fill="#008000"/><rect x="8.48" y="153.13" width="10.30" height="1.4" fill="#001080"/><rect x="19.92" y="153.13" width="1.14" height="1.4" fill="#000000"/><rect x="22.20" y="153.13" width="4.58" height="1.4" fill="#001080"/><rect x="26.78" y="153.13" width="1.14" height="1.4" fill="#319331"/><rect x="27.92" y="153.13" width="8.01" height="1.4" fill="#a31515"/><rect x="35.93" y="153.13" width="1.14" height="1.4" fill="#319331"/><rect x="8.48" y="155.41" width="11.44" height="1.4" fill="#001080"/><rect x="21.06" y="155.41" width="1.14" height="1.4" fill="#000000"/><rect x="23.35" y="155.41" width="4.58" height="1.4" fill="#0000ff"/><rect x="29.07" y="155.41" width="2.29" height="1.4" fill="#af00db"/><rect x="32.50" y="155.41" width="3.43" height="1.4" fill="#795e26"/><rect x="35.93" y="155.41" width="1.14" height="1.4" fill="#0431fa"/><rect x="37.08" y="155.41" width="4.58" height="1.4" fill="#001080"/><rect x="41.65" y="155.41" width="1.14" height="1.4" fill="#319331"/><rect x="42.80" y="155.41" width="9.15" height="1.4" fill="#a31515"/><rect x="51.95" y="155.41" width="1.14" height="1.4" fill="#319331"/><rect x="53.09" y="155.41" width="1.14" height="1.4" fill="#0431fa"/><rect x="55.38" y="155.41" width="1.14" height="1.4" fill="#000000"/><rect x="56.52" y="155.41" width="1.14" height="1.4" fill="#000000"/><rect x="58.81" y="155.41" width="1.14" height="1.4" fill="#098658"/><rect x="61.10" y="155.41" width="4.58" height="1.4" fill="#af00db"/><rect x="66.82" y="155.41" width="4.58" height="1.4" fill="#001080"/><rect x="71.40" y="155.41" width="1.14" height="1.4" fill="#319331"/><rect x="72.54" y="155.41" width="9.15" height="1.4" fill="#a31515"/><rect x="81.69" y="155.41" width="1.14" height="1.4" fill="#319331"/><rect x="82.84" y="155.41" width="1.14" height="1.4" fill="#319331"/><rect x="83.98" y="155.41" width="1.14" height="1.4" fill="#098658"/><rect x="85.12" y="155.41" width="1.14" height="1.4" fill="#319331"/><rect x="8.48" y="157.69" width="11.44" height="1.4" fill="#001080"/><rect x="21.06" y="157.69" width="1.14" height="1.4" fill="#000000"/><rect x="23.35" y="157.69" width="4.58" height="1.4" fill="#001080"/><rect x="27.92" y="157.69" width="1.14" height="1.4" fill="#319331"/><rect x="29.07" y="157.69" width="12.58" height="1.4" fill="#a31515"/><rect x="41.65" y="157.69" width="1.14" height="1.4" fill="#319331"/><rect x="8.48" y="159.97" width="16.02" height="1.4" fill="#001080"/><rect x="25.64" y="159.97" width="1.14" height="1.4" fill="#000000"/><rect x="27.92" y="159.97" width="4.58" height="1.4" fill="#001080"/><rect x="32.50" y="159.97" width="1.14" height="1.4" fill="#319331"/><rect x="33.64" y="159.97" width="17.16" height="1.4" fill="#a31515"/><rect x="50.80" y="159.97" width="1.14" height="1.4" fill="#319331"/><rect x="8.48" y="162.25" width="13.73" height="1.4" fill="#001080"/><rect x="23.35" y="162.25" width="1.14" height="1.4" fill="#000000"/><rect x="25.64" y="162.25" width="4.58" height="1.4" fill="#001080"/><rect x="30.21" y="162.25" width="1.14" height="1.4" fill="#319331"/><rect x="31.36" y="162.25" width="16.02" height="1.4" fill="#a31515"/><rect x="47.37" y="162.25" width="1.14" height="1.4" fill="#319331"/><rect x="8.48" y="164.53" width="6.86" height="1.4" fill="#001080"/><rect x="16.48" y="164.53" width="1.14" height="1.4" fill="#000000"/><rect x="18.77" y="164.53" width="4.58" height="1.4" fill="#001080"/><rect x="23.35" y="164.53" width="1.14" height="1.4" fill="#319331"/><rect x="24.49" y="164.53" width="11.44" height="1.4" fill="#a31515"/><rect x="35.93" y="164.53" width="1.14" height="1.4" fill="#319331"/><rect x="8.48" y="166.81" width="6.86" height="1.4" fill="#001080"/><rect x="16.48" y="166.81" width="1.14" height="1.4" fill="#000000"/><rect x="18.77" y="166.81" width="4.58" height="1.4" fill="#001080"/><rect x="23.35" y="166.81" width="1.14" height="1.4" fill="#319331"/><rect x="24.49" y="166.81" width="9.15" height="1.4" fill="#a31515"/><rect x="33.64" y="166.81" width="1.14" height="1.4" fill="#319331"/><rect x="8.48" y="169.09" width="11.44" height="1.4" fill="#001080"/><rect x="21.06" y="169.09" width="1.14" height="1.4" fill="#000000"/><rect x="23.35" y="169.09" width="4.58" height="1.4" fill="#001080"/><rect x="27.92" y="169.09" width="1.14" height="1.4" fill="#319331"/><rect x="29.07" y="169.09" width="12.58" height="1.4" fill="#a31515"/><rect x="41.65" y="169.09" width="1.14" height="1.4" fill="#319331"/><rect x="8.48" y="171.37" width="6.86" height="1.4" fill="#001080"/><rect x="16.48" y="171.37" width="1.14" height="1.4" fill="#000000"/><rect x="18.77" y="171.37" width="11.44" height="1.4" fill="#001080"/><rect x="30.21" y="171.37" width="1.14" height="1.4" fill="#000000"/><rect x="31.36" y="171.37" width="5.72" height="1.4" fill="#795e26"/><rect x="37.08" y="171.37" width="1.14" height="1.4" fill="#0431fa"/><rect x="38.22" y="171.37" width="6.86" height="1.4" fill="#001080"/><rect x="45.08" y="171.37" width="1.14" height="1.4" fill="#0431fa"/><rect x="8.48" y="173.65" width="6.86" height="1.4" fill="#001080"/><rect x="16.48" y="173.65" width="1.14" height="1.4" fill="#000000"/><rect x="18.77" y="173.65" width="5.72" height="1.4" fill="#795e26"/><rect x="24.49" y="173.65" width="1.14" height="1.4" fill="#0431fa"/><rect x="13.05" y="175.93" width="11.44" height="1.4" fill="#001080"/><rect x="24.49" y="175.93" width="1.14" height="1.4" fill="#000000"/><rect x="26.78" y="175.93" width="6.86" height="1.4" fill="#0000ff"/><rect x="34.79" y="175.93" width="2.29" height="1.4" fill="#001080"/><rect x="37.08" y="175.93" width="1.14" height="1.4" fill="#000000"/><rect x="39.36" y="175.93" width="2.29" height="1.4" fill="#001080"/><rect x="42.80" y="175.93" width="1.14" height="1.4" fill="#000000"/><rect x="43.94" y="175.93" width="1.14" height="1.4" fill="#000000"/><rect x="46.23" y="175.93" width="6.86" height="1.4" fill="#001080"/><rect x="53.09" y="175.93" width="1.14" height="1.4" fill="#0431fa"/><rect x="8.48" y="178.21" width="16.02" height="1.4" fill="#001080"/><rect x="25.64" y="178.21" width="1.14" height="1.4" fill="#000000"/><rect x="27.92" y="178.21" width="17.16" height="1.4" fill="#795e26"/><rect x="45.08" y="178.21" width="1.14" height="1.4" fill="#0431fa"/><rect x="46.23" y="178.21" width="6.86" height="1.4" fill="#001080"/><rect x="53.09" y="178.21" width="1.14" height="1.4" fill="#0431fa"/><rect x="8.48" y="180.49" width="11.44" height="1.4" fill="#001080"/><rect x="21.06" y="180.49" width="1.14" height="1.4" fill="#000000"/><rect x="23.35" y="180.49" width="4.58" height="1.4" fill="#0000ff"/><rect x="29.07" y="180.49" width="2.29" height="1.4" fill="#af00db"/><rect x="32.50" y="180.49" width="3.43" height="1.4" fill="#795e26"/><rect x="35.93" y="180.49" width="1.14" height="1.4" fill="#0431fa"/><rect x="37.08" y="180.49" width="6.86" height="1.4" fill="#001080"/><rect x="43.94" y="180.49" width="1.14" height="1.4" fill="#0431fa"/><rect x="46.23" y="180.49" width="1.14" height="1.4" fill="#000000"/><rect x="47.37" y="180.49" width="1.14" height="1.4" fill="#000000"/><rect x="49.66" y="180.49" width="1.14" height="1.4" fill="#098658"/><rect x="51.95" y="180.49" width="4.58" height="1.4" fill="#af00db"/><rect x="57.67" y="180.49" width="6.86" height="1.4" fill="#001080"/><rect x="64.53" y="180.49" width="1.14" height="1.4" fill="#319331"/><rect x="65.68" y="180.49" width="1.14" height="1.4" fill="#098658"/><rect x="66.82" y="180.49" width="1.14" height="1.4" fill="#319331"/><rect x="8.48" y="182.77" width="10.30" height="1.4" fill="#001080"/><rect x="19.92" y="182.77" width="1.14" height="1.4" fill="#000000"/><rect x="22.20" y="182.77" width="11.44" height="1.4" fill="#001080"/><rect x="34.79" y="182.77" width="3.43" height="1.4" fill="#0000ff"/><rect x="39.36" y="182.77" width="3.43" height="1.4" fill="#0000ff"/><rect x="43.94" y="182.77" width="16.02" height="1.4" fill="#001080"/><rect x="8.48" y="187.33" width="1.14" height="1.4" fill="#008000"/><rect x="10.76" y="187.33" width="2.29" height="1.4" fill="#008000"/><rect x="14.20" y="187.33" width="2.29" height="1.4" fill="#008000"/><rect x="17.63" y="187.33" width="3.43" height="1.4" fill="#008000"/><rect x="22.20" y="187.33" width="3.43" height="1.4" fill="#008000"/><rect x="26.78" y="187.33" width="3.43" height="1.4" fill="#008000"/><rect x="31.36" y="187.33" width="2.29" height="1.4" fill="#008000"/><rect x="34.79" y="187.33" width="5.72" height="1.4" fill="#008000"/><rect x="41.65" y="187.33" width="3.43" height="1.4" fill="#008000"/><rect x="46.23" y="187.33" width="5.72" height="1.4" fill="#008000"/><rect x="53.09" y="187.33" width="4.58" height="1.4" fill="#008000"/><rect x="58.81" y="187.33" width="2.29" height="1.4" fill="#008000"/><rect x="62.24" y="187.33" width="3.43" height="1.4" fill="#008000"/><rect x="66.82" y="187.33" width="5.72" height="1.4" fill="#008000"/><rect x="8.48" y="189.61" width="2.29" height="1.4" fill="#af00db"/><rect x="11.91" y="189.61" width="1.14" height="1.4" fill="#0431fa"/><rect x="13.05" y="189.61" width="3.43" height="1.4" fill="#0000ff"/><rect x="17.63" y="189.61" width="11.44" height="1.4" fill="#001080"/><rect x="29.07" y="189.61" width="1.14" height="1.4" fill="#0431fa"/><rect x="30.21" y="189.61" width="1.14" height="1.4" fill="#000000"/><rect x="13.05" y="191.89" width="6.86" height="1.4" fill="#af00db"/><rect x="21.06" y="191.89" width="1.14" height="1.4" fill="#0431fa"/><rect x="22.20" y="191.89" width="6.86" height="1.4" fill="#a31515"/><rect x="29.07" y="191.89" width="1.14" height="1.4" fill="#000000"/><rect x="31.36" y="191.89" width="10.30" height="1.4" fill="#001080"/><rect x="41.65" y="191.89" width="1.14" height="1.4" fill="#319331"/><rect x="42.80" y="191.89" width="1.14" height="1.4" fill="#000000"/><rect x="43.94" y="191.89" width="1.14" height="1.4" fill="#098658"/><rect x="45.08" y="191.89" width="1.14" height="1.4" fill="#319331"/><rect x="46.23" y="191.89" width="1.14" height="1.4" fill="#0431fa"/><rect x="8.48" y="196.45" width="17.16" height="1.4" fill="#001080"/><rect x="26.78" y="196.45" width="1.14" height="1.4" fill="#000000"/><rect x="29.07" y="196.45" width="9.15" height="1.4" fill="#795e26"/><rect x="38.22" y="196.45" width="1.14" height="1.4" fill="#0431fa"/><rect x="39.36" y="196.45" width="11.44" height="1.4" fill="#001080"/><rect x="50.80" y="196.45" width="1.14" height="1.4" fill="#0431fa"/><rect x="8.48" y="198.73" width="16.02" height="1.4" fill="#001080"/><rect x="25.64" y="198.73" width="1.14" height="1.4" fill="#000000"/><rect x="27.92" y="198.73" width="16.02" height="1.4" fill="#795e26"/><rect x="43.94" y="198.73" width="1.14" height="1.4" fill="#0431fa"/><rect x="45.08" y="198.73" width="10.30" height="1.4" fill="#001080"/><rect x="55.38" y="198.73" width="1.14" height="1.4" fill="#000000"/><rect x="57.67" y="198.73" width="17.16" height="1.4" fill="#001080"/><rect x="74.83" y="198.73" width="1.14" height="1.4" fill="#0431fa"/><rect x="8.48" y="203.29" width="1.14" height="1.4" fill="#008000"/><rect x="10.76" y="203.29" width="2.29" height="1.4" fill="#008000"/><rect x="14.20" y="203.29" width="2.29" height="1.4" fill="#008000"/><rect x="17.63" y="203.29" width="4.58" height="1.4" fill="#008000"/><rect x="23.35" y="203.29" width="3.43" height="1.4" fill="#008000"/><rect x="27.92" y="203.29" width="4.58" height="1.4" fill="#008000"/><rect x="33.64" y="203.29" width="4.58" height="1.4" fill="#008000"/><rect x="39.36" y="203.29" width="4.58" height="1.4" fill="#008000"/><rect x="45.08" y="203.29" width="4.58" height="1.4" fill="#008000"/><rect x="50.80" y="203.29" width="2.29" height="1.4" fill="#008000"/><rect x="54.24" y="203.29" width="3.43" height="1.4" fill="#008000"/><rect x="58.81" y="203.29" width="5.72" height="1.4" fill="#008000"/><rect x="65.68" y="203.29" width="5.72" height="1.4" fill="#008000"/><rect x="72.54" y="203.29" width="2.29" height="1.4" fill="#008000"/><rect x="75.97" y="203.29" width="5.72" height="1.4" fill="#008000"/><rect x="82.84" y="203.29" width="2.29" height="1.4" fill="#008000"/><rect x="8.48" y="205.57" width="2.29" height="1.4" fill="#af00db"/><rect x="11.91" y="205.57" width="3.43" height="1.4" fill="#795e26"/><rect x="15.34" y="205.57" width="1.14" height="1.4" fill="#0431fa"/><rect x="16.48" y="205.57" width="16.02" height="1.4" fill="#001080"/><rect x="32.50" y="205.57" width="1.14" height="1.4" fill="#0431fa"/><rect x="34.79" y="205.57" width="1.14" height="1.4" fill="#000000"/><rect x="37.08" y="205.57" width="1.14" height="1.4" fill="#098658"/><rect x="38.22" y="205.57" width="1.14" height="1.4" fill="#000000"/><rect x="13.05" y="207.85" width="6.86" height="1.4" fill="#af00db"/><rect x="21.06" y="207.85" width="1.14" height="1.4" fill="#0431fa"/><rect x="22.20" y="207.85" width="6.86" height="1.4" fill="#a31515"/><rect x="29.07" y="207.85" width="1.14" height="1.4" fill="#000000"/><rect x="31.36" y="207.85" width="16.02" height="1.4" fill="#001080"/><rect x="47.37" y="207.85" width="1.14" height="1.4" fill="#319331"/><rect x="48.52" y="207.85" width="1.14" height="1.4" fill="#000000"/><rect x="49.66" y="207.85" width="1.14" height="1.4" fill="#098658"/><rect x="50.80" y="207.85" width="1.14" height="1.4" fill="#319331"/><rect x="51.95" y="207.85" width="1.14" height="1.4" fill="#0431fa"/><rect x="8.48" y="212.41" width="1.14" height="1.4" fill="#008000"/><rect x="10.76" y="212.41" width="2.29" height="1.4" fill="#008000"/><rect x="14.20" y="212.41" width="2.29" height="1.4" fill="#008000"/><rect x="17.63" y="212.41" width="5.72" height="1.4" fill="#008000"/><rect x="24.49" y="212.41" width="4.58" height="1.4" fill="#008000"/><rect x="30.21" y="212.41" width="5.72" height="1.4" fill="#008000"/><rect x="37.08" y="212.41" width="4.58" height="1.4" fill="#008000"/><rect x="42.80" y="212.41" width="6.86" height="1.4" fill="#008000"/><rect x="50.80" y="212.41" width="3.43" height="1.4" fill="#008000"/><rect x="55.38" y="212.41" width="4.58" height="1.4" fill="#008000"/><rect x="8.48" y="214.69" width="1.14" height="1.4" fill="#008000"/><rect x="10.76" y="214.69" width="9.15" height="1.4" fill="#008000"/><rect x="8.48" y="216.97" width="1.14" height="1.4" fill="#008000"/><rect x="10.76" y="216.97" width="3.43" height="1.4" fill="#008000"/><rect x="15.34" y="216.97" width="5.72" height="1.4" fill="#008000"/><rect x="22.20" y="216.97" width="6.86" height="1.4" fill="#008000"/><rect x="30.21" y="216.97" width="6.86" height="1.4" fill="#008000"/><rect x="38.22" y="216.97" width="4.58" height="1.4" fill="#008000"/><rect x="43.94" y="216.97" width="2.29" height="1.4" fill="#008000"/><rect x="47.37" y="216.97" width="2.29" height="1.4" fill="#008000"/><rect x="50.80" y="216.97" width="8.01" height="1.4" fill="#008000"/><rect x="8.48" y="219.25" width="1.14" height="1.4" fill="#008000"/><rect x="8.48" y="221.53" width="1.14" height="1.4" fill="#008000"/><rect x="10.76" y="221.53" width="2.29" height="1.4" fill="#008000"/><rect x="14.20" y="221.53" width="5.72" height="1.4" fill="#008000"/><rect x="21.06" y="221.53" width="6.86" height="1.4" fill="#008000"/><rect x="8.48" y="223.81" width="1.14" height="1.4" fill="#008000"/><rect x="8.48" y="226.09" width="1.14" height="1.4" fill="#008000"/><rect x="10.76" y="226.09" width="2.29" height="1.4" fill="#008000"/><rect x="14.20" y="226.09" width="5.72" height="1.4" fill="#008000"/><rect x="21.06" y="226.09" width="3.43" height="1.4" fill="#008000"/><rect x="25.64" y="226.09" width="4.58" height="1.4" fill="#008000"/><rect x="8.48" y="228.37" width="1.14" height="1.4" fill="#008000"/><rect x="10.76" y="228.37" width="2.29" height="1.4" fill="#008000"/><rect x="14.20" y="228.37" width="6.86" height="1.4" fill="#008000"/><rect x="22.20" y="228.37" width="3.43" height="1.4" fill="#008000"/><rect x="26.78" y="228.37" width="5.72" height="1.4" fill="#008000"/><rect x="8.48" y="232.93" width="1.14" height="1.4" fill="#008000"/><rect x="10.76" y="232.93" width="5.72" height="1.4" fill="#008000"/><rect x="17.63" y="232.93" width="3.43" height="1.4" fill="#008000"/><rect x="22.20" y="232.93" width="3.43" height="1.4" fill="#008000"/><rect x="26.78" y="232.93" width="4.58" height="1.4" fill="#008000"/><rect x="32.50" y="232.93" width="9.15" height="1.4" fill="#008000"/><rect x="42.80" y="232.93" width="4.58" height="1.4" fill="#008000"/><rect x="48.52" y="232.93" width="3.43" height="1.4" fill="#008000"/><rect x="53.09" y="232.93" width="2.29" height="1.4" fill="#008000"/><rect x="56.52" y="232.93" width="5.72" height="1.4" fill="#008000"/><rect x="63.39" y="232.93" width="4.58" height="1.4" fill="#008000"/><rect x="69.11" y="232.93" width="4.58" height="1.4" fill="#008000"/><rect x="74.83" y="232.93" width="3.43" height="1.4" fill="#008000"/><rect x="79.40" y="232.93" width="5.72" height="1.4" fill="#008000"/><rect x="86.27" y="232.93" width="2.29" height="1.4" fill="#008000"/><rect x="8.48" y="235.21" width="1.14" height="1.4" fill="#008000"/><rect x="10.76" y="235.21" width="5.72" height="1.4" fill="#008000"/><rect x="17.63" y="235.21" width="6.86" height="1.4" fill="#008000"/><rect x="25.64" y="235.21" width="3.43" height="1.4" fill="#008000"/><rect x="30.21" y="235.21" width="5.72" height="1.4" fill="#008000"/><rect x="8.48" y="237.49" width="2.29" height="1.4" fill="#af00db"/><rect x="11.91" y="237.49" width="1.14" height="1.4" fill="#0431fa"/><rect x="13.05" y="237.49" width="3.43" height="1.4" fill="#0000ff"/><rect x="17.63" y="237.49" width="11.44" height="1.4" fill="#001080"/><rect x="30.21" y="237.49" width="3.43" height="1.4" fill="#0000ff"/><rect x="34.79" y="237.49" width="3.43" height="1.4" fill="#0000ff"/><rect x="39.36" y="237.49" width="16.02" height="1.4" fill="#001080"/><rect x="55.38" y="237.49" width="1.14" height="1.4" fill="#0431fa"/><rect x="56.52" y="237.49" width="1.14" height="1.4" fill="#000000"/><rect x="13.05" y="239.77" width="6.86" height="1.4" fill="#af00db"/><rect x="21.06" y="239.77" width="1.14" height="1.4" fill="#0431fa"/><rect x="22.20" y="239.77" width="14.87" height="1.4" fill="#a31515"/><rect x="37.08" y="239.77" width="1.14" height="1.4" fill="#000000"/><rect x="39.36" y="239.77" width="4.58" height="1.4" fill="#0000ff"/><rect x="43.94" y="239.77" width="1.14" height="1.4" fill="#0431fa"/><rect x="8.48" y="244.33" width="1.14" height="1.4" fill="#008000"/><rect x="10.76" y="244.33" width="2.29" height="1.4" fill="#008000"/><rect x="14.20" y="244.33" width="5.72" height="1.4" fill="#008000"/><rect x="21.06" y="244.33" width="4.58" height="1.4" fill="#008000"/><rect x="26.78" y="244.33" width="3.43" height="1.4" fill="#008000"/><rect x="31.36" y="244.33" width="5.72" height="1.4" fill="#008000"/><rect x="38.22" y="244.33" width="4.58" height="1.4" fill="#008000"/><rect x="43.94" y="244.33" width="6.86" height="1.4" fill="#008000"/><rect x="51.95" y="244.33" width="5.72" height="1.4" fill="#008000"/><rect x="58.81" y="244.33" width="6.86" height="1.4" fill="#008000"/><rect x="8.48" y="246.61" width="22.88" height="1.4" fill="#001080"/><rect x="32.50" y="246.61" width="1.14" height="1.4" fill="#000000"/><rect x="34.79" y="246.61" width="16.02" height="1.4" fill="#795e26"/><rect x="50.80" y="246.61" width="1.14" height="1.4" fill="#0431fa"/><rect x="51.95" y="246.61" width="10.30" height="1.4" fill="#001080"/><rect x="62.24" y="246.61" width="1.14" height="1.4" fill="#000000"/><rect x="64.53" y="246.61" width="11.44" height="1.4" fill="#001080"/><rect x="75.97" y="246.61" width="1.14" height="1.4" fill="#0431fa"/><rect x="8.48" y="248.89" width="2.29" height="1.4" fill="#af00db"/><rect x="11.91" y="248.89" width="1.14" height="1.4" fill="#0431fa"/><rect x="13.05" y="248.89" width="3.43" height="1.4" fill="#795e26"/><rect x="16.48" y="248.89" width="1.14" height="1.4" fill="#0431fa"/><rect x="17.63" y="248.89" width="22.88" height="1.4" fill="#001080"/><rect x="40.51" y="248.89" width="1.14" height="1.4" fill="#0431fa"/><rect x="42.80" y="248.89" width="1.14" height="1.4" fill="#000000"/><rect x="43.94" y="248.89" width="1.14" height="1.4" fill="#000000"/><rect x="46.23" y="248.89" width="1.14" height="1.4" fill="#098658"/><rect x="47.37" y="248.89" width="1.14" height="1.4" fill="#0431fa"/><rect x="48.52" y="248.89" width="1.14" height="1.4" fill="#000000"/><rect x="13.05" y="251.17" width="6.86" height="1.4" fill="#af00db"/><rect x="21.06" y="251.17" width="1.14" height="1.4" fill="#0431fa"/><rect x="22.20" y="251.17" width="6.86" height="1.4" fill="#a31515"/><rect x="29.07" y="251.17" width="1.14" height="1.4" fill="#000000"/><rect x="31.36" y="251.17" width="10.30" height="1.4" fill="#001080"/><rect x="41.65" y="251.17" width="1.14" height="1.4" fill="#319331"/><rect x="42.80" y="251.17" width="1.14" height="1.4" fill="#000000"/><rect x="43.94" y="251.17" width="1.14" height="1.4" fill="#098658"/><rect x="45.08" y="251.17" width="1.14" height="1.4" fill="#319331"/><rect x="46.23" y="251.17" width="1.14" height="1.4" fill="#0431fa"/><rect x="8.48" y="255.73" width="37.75" height="1.4" fill="#001080"/><rect x="47.37" y="255.73" width="1.14" height="1.4" fill="#000000"/><rect x="49.66" y="255.73" width="16.02" height="1.4" fill="#001080"/><rect x="66.82" y="255.73" width="3.43" height="1.4" fill="#0000ff"/><rect x="71.40" y="255.73" width="16.02" height="1.4" fill="#001080"/><rect x="87.41" y="255.73" width="1.14" height="1.4" fill="#319331"/><rect x="88.56" y="255.73" width="5.44" height="1.4" fill="#a31515"/><rect x="13.05" y="258.01" width="3.43" height="1.4" fill="#0000ff"/><rect x="17.63" y="258.01" width="16.02" height="1.4" fill="#001080"/><rect x="33.64" y="258.01" width="1.14" height="1.4" fill="#319331"/><rect x="34.79" y="258.01" width="6.86" height="1.4" fill="#a31515"/><rect x="41.65" y="258.01" width="1.14" height="1.4" fill="#319331"/><rect x="43.94" y="258.01" width="1.14" height="1.4" fill="#000000"/><rect x="45.08" y="258.01" width="1.14" height="1.4" fill="#000000"/><rect x="47.37" y="258.01" width="1.14" height="1.4" fill="#0431fa"/><rect x="48.52" y="258.01" width="3.43" height="1.4" fill="#795e26"/><rect x="51.95" y="258.01" width="1.14" height="1.4" fill="#0431fa"/><rect x="53.09" y="258.01" width="13.73" height="1.4" fill="#001080"/><rect x="66.82" y="258.01" width="1.14" height="1.4" fill="#0431fa"/><rect x="69.11" y="258.01" width="1.14" height="1.4" fill="#000000"/><rect x="71.40" y="258.01" width="1.14" height="1.4" fill="#098658"/><rect x="72.54" y="258.01" width="1.14" height="1.4" fill="#0431fa"/><rect x="8.48" y="262.57" width="1.14" height="1.4" fill="#008000"/><rect x="10.76" y="262.57" width="5.72" height="1.4" fill="#008000"/><rect x="17.63" y="262.57" width="3.43" height="1.4" fill="#008000"/><rect x="22.20" y="262.57" width="9.15" height="1.4" fill="#008000"/><rect x="32.50" y="262.57" width="2.29" height="1.4" fill="#008000"/><rect x="35.93" y="262.57" width="2.29" height="1.4" fill="#008000"/><rect x="39.36" y="262.57" width="2.29" height="1.4" fill="#008000"/><rect x="42.80" y="262.57" width="4.58" height="1.4" fill="#008000"/><rect x="48.52" y="262.57" width="4.58" height="1.4" fill="#008000"/><rect x="8.48" y="264.85" width="1.14" height="1.4" fill="#008000"/><rect x="10.76" y="264.85" width="2.29" height="1.4" fill="#008000"/><rect x="8.48" y="267.13" width="1.14" height="1.4" fill="#008000"/><rect x="10.76" y="267.13" width="1.14" height="1.4" fill="#008000"/><rect x="13.05" y="267.13" width="2.29" height="1.4" fill="#008000"/><rect x="16.48" y="267.13" width="5.72" height="1.4" fill="#008000"/><rect x="23.35" y="267.13" width="2.29" height="1.4" fill="#008000"/><rect x="26.78" y="267.13" width="6.86" height="1.4" fill="#008000"/><rect x="34.79" y="267.13" width="3.43" height="1.4" fill="#008000"/><rect x="39.36" y="267.13" width="6.86" height="1.4" fill="#008000"/><rect x="47.37" y="267.13" width="5.72" height="1.4" fill="#008000"/><rect x="54.24" y="267.13" width="1.14" height="1.4" fill="#008000"/><rect x="56.52" y="267.13" width="2.29" height="1.4" fill="#008000"/><rect x="59.96" y="267.13" width="3.43" height="1.4" fill="#008000"/><rect x="64.53" y="267.13" width="6.86" height="1.4" fill="#008000"/><rect x="8.48" y="271.69" width="2.29" height="1.4" fill="#af00db"/><rect x="11.91" y="271.69" width="1.14" height="1.4" fill="#0431fa"/><rect x="13.05" y="271.69" width="10.30" height="1.4" fill="#001080"/><rect x="24.49" y="271.69" width="2.29" height="1.4" fill="#0000ff"/><rect x="27.92" y="271.69" width="37.75" height="1.4" fill="#001080"/><rect x="65.68" y="271.69" width="1.14" height="1.4" fill="#0431fa"/><rect x="66.82" y="271.69" width="1.14" height="1.4" fill="#000000"/><rect x="13.05" y="273.97" width="9.15" height="1.4" fill="#001080"/><rect x="23.35" y="273.97" width="1.14" height="1.4" fill="#000000"/><rect x="25.64" y="273.97" width="1.14" height="1.4" fill="#0431fa"/><rect x="26.78" y="273.97" width="1.14" height="1.4" fill="#0431fa"/><rect x="13.05" y="276.25" width="2.29" height="1.4" fill="#af00db"/><rect x="16.48" y="276.25" width="1.14" height="1.4" fill="#0431fa"/><rect x="17.63" y="276.25" width="10.30" height="1.4" fill="#001080"/><rect x="27.92" y="276.25" width="1.14" height="1.4" fill="#0431fa"/><rect x="29.07" y="276.25" width="1.14" height="1.4" fill="#000000"/><rect x="17.63" y="278.53" width="9.15" height="1.4" fill="#001080"/><rect x="26.78" y="278.53" width="1.14" height="1.4" fill="#319331"/><rect x="27.92" y="278.53" width="14.87" height="1.4" fill="#a31515"/><rect x="42.80" y="278.53" width="1.14" height="1.4" fill="#319331"/><rect x="45.08" y="278.53" width="1.14" height="1.4" fill="#000000"/><rect x="47.37" y="278.53" width="4.58" height="1.4" fill="#0000ff"/><rect x="13.05" y="283.09" width="1.14" height="1.4" fill="#008000"/><rect x="15.34" y="283.09" width="2.29" height="1.4" fill="#008000"/><rect x="18.77" y="283.09" width="5.72" height="1.4" fill="#008000"/><rect x="25.64" y="283.09" width="3.43" height="1.4" fill="#008000"/><rect x="30.21" y="283.09" width="2.29" height="1.4" fill="#008000"/><rect x="33.64" y="283.09" width="6.86" height="1.4" fill="#008000"/><rect x="41.65" y="283.09" width="2.29" height="1.4" fill="#008000"/><rect x="45.08" y="283.09" width="3.43" height="1.4" fill="#008000"/><rect x="49.66" y="283.09" width="6.86" height="1.4" fill="#008000"/><rect x="13.05" y="285.37" width="2.29" height="1.4" fill="#af00db"/><rect x="16.48" y="285.37" width="1.14" height="1.4" fill="#0431fa"/><rect x="17.63" y="285.37" width="3.43" height="1.4" fill="#795e26"/><rect x="21.06" y="285.37" width="1.14" height="1.4" fill="#0431fa"/><rect x="22.20" y="285.37" width="16.02" height="1.4" fill="#795e26"/><rect x="38.22" y="285.37" width="1.14" height="1.4" fill="#0431fa"/><rect x="39.36" y="285.37" width="6.86" height="1.4" fill="#001080"/><rect x="46.23" y="285.37" width="1.14" height="1.4" fill="#000000"/><rect x="48.52" y="285.37" width="11.44" height="1.4" fill="#001080"/><rect x="59.96" y="285.37" width="1.14" height="1.4" fill="#0431fa"/><rect x="61.10" y="285.37" width="1.14" height="1.4" fill="#0431fa"/><rect x="63.39" y="285.37" width="1.14" height="1.4" fill="#000000"/><rect x="64.53" y="285.37" width="1.14" height="1.4" fill="#000000"/><rect x="66.82" y="285.37" width="1.14" height="1.4" fill="#098658"/><rect x="67.96" y="285.37" width="1.14" height="1.4" fill="#0431fa"/><rect x="69.11" y="285.37" width="1.14" height="1.4" fill="#000000"/><rect x="17.63" y="287.65" width="9.15" height="1.4" fill="#001080"/><rect x="26.78" y="287.65" width="1.14" height="1.4" fill="#319331"/><rect x="27.92" y="287.65" width="6.86" height="1.4" fill="#a31515"/><rect x="34.79" y="287.65" width="1.14" height="1.4" fill="#319331"/><rect x="37.08" y="287.65" width="1.14" height="1.4" fill="#000000"/><rect x="39.36" y="287.65" width="22.88" height="1.4" fill="#001080"/><rect x="62.24" y="287.65" width="1.14" height="1.4" fill="#319331"/><rect x="63.39" y="287.65" width="1.14" height="1.4" fill="#000000"/><rect x="64.53" y="287.65" width="1.14" height="1.4" fill="#098658"/><rect x="65.68" y="287.65" width="1.14" height="1.4" fill="#319331"/><rect x="17.63" y="289.93" width="6.86" height="1.4" fill="#af00db"/><rect x="25.64" y="289.93" width="9.15" height="1.4" fill="#001080"/><rect x="13.05" y="294.49" width="25.17" height="1.4" fill="#001080"/><rect x="39.36" y="294.49" width="1.14" height="1.4" fill="#000000"/><rect x="41.65" y="294.49" width="24.02" height="1.4" fill="#795e26"/><rect x="65.68" y="294.49" width="1.14" height="1.4" fill="#0431fa"/><rect x="66.82" y="294.49" width="6.86" height="1.4" fill="#001080"/><rect x="73.68" y="294.49" width="1.14" height="1.4" fill="#000000"/><rect x="75.97" y="294.49" width="11.44" height="1.4" fill="#001080"/><rect x="87.41" y="294.49" width="1.14" height="1.4" fill="#0431fa"/><rect x="13.05" y="296.77" width="26.31" height="1.4" fill="#001080"/><rect x="40.51" y="296.77" width="1.14" height="1.4" fill="#000000"/><rect x="42.80" y="296.77" width="1.14" height="1.4" fill="#0431fa"/><rect x="43.94" y="296.77" width="6.86" height="1.4" fill="#001080"/><rect x="51.95" y="296.77" width="1.14" height="1.4" fill="#000000"/><rect x="54.24" y="296.77" width="3.43" height="1.4" fill="#795e26"/><rect x="57.67" y="296.77" width="1.14" height="1.4" fill="#0431fa"/><rect x="58.81" y="296.77" width="6.86" height="1.4" fill="#001080"/><rect x="65.68" y="296.77" width="1.14" height="1.4" fill="#0431fa"/><rect x="67.96" y="296.77" width="1.14" height="1.4" fill="#000000"/><rect x="70.25" y="296.77" width="23.75" height="1.4" fill="#001080"/><rect x="13.05" y="301.33" width="1.14" height="1.4" fill="#008000"/><rect x="15.34" y="301.33" width="2.29" height="1.4" fill="#008000"/><rect x="18.77" y="301.33" width="2.29" height="1.4" fill="#008000"/><rect x="22.20" y="301.33" width="9.15" height="1.4" fill="#008000"/><rect x="32.50" y="301.33" width="3.43" height="1.4" fill="#008000"/><rect x="37.08" y="301.33" width="5.72" height="1.4" fill="#008000"/><rect x="43.94" y="301.33" width="2.29" height="1.4" fill="#008000"/><rect x="47.37" y="301.33" width="4.58" height="1.4" fill="#008000"/><rect x="53.09" y="301.33" width="5.72" height="1.4" fill="#008000"/><rect x="59.96" y="301.33" width="3.43" height="1.4" fill="#008000"/><rect x="64.53" y="301.33" width="3.43" height="1.4" fill="#008000"/><rect x="69.11" y="301.33" width="8.01" height="1.4" fill="#008000"/><rect x="78.26" y="301.33" width="4.58" height="1.4" fill="#008000"/><rect x="83.98" y="301.33" width="2.29" height="1.4" fill="#008000"/><rect x="87.41" y="301.33" width="6.59" height="1.4" fill="#008000"/><rect x="13.05" y="303.61" width="1.14" height="1.4" fill="#008000"/><rect x="15.34" y="303.61" width="2.29" height="1.4" fill="#008000"/><rect x="18.77" y="303.61" width="2.29" height="1.4" fill="#008000"/><rect x="22.20" y="303.61" width="3.43" height="1.4" fill="#008000"/><rect x="26.78" y="303.61" width="9.15" height="1.4" fill="#008000"/><rect x="37.08" y="303.61" width="2.29" height="1.4" fill="#008000"/><rect x="40.51" y="303.61" width="8.01" height="1.4" fill="#008000"/><rect x="49.66" y="303.61" width="3.43" height="1.4" fill="#008000"/><rect x="54.24" y="303.61" width="5.72" height="1.4" fill="#008000"/><rect x="61.10" y="303.61" width="4.58" height="1.4" fill="#008000"/><rect x="66.82" y="303.61" width="3.43" height="1.4" fill="#008000"/><rect x="71.40" y="303.61" width="4.58" height="1.4" fill="#008000"/><rect x="77.12" y="303.61" width="5.72" height="1.4" fill="#008000"/><rect x="83.98" y="303.61" width="3.43" height="1.4" fill="#008000"/><rect x="88.56" y="303.61" width="5.44" height="1.4" fill="#008000"/><rect x="13.05" y="305.89" width="1.14" height="1.4" fill="#008000"/><rect x="15.34" y="305.89" width="2.29" height="1.4" fill="#008000"/><rect x="18.77" y="305.89" width="2.29" height="1.4" fill="#008000"/><rect x="22.20" y="305.89" width="4.58" height="1.4" fill="#008000"/><rect x="27.92" y="305.89" width="8.01" height="1.4" fill="#008000"/><rect x="37.08" y="305.89" width="2.29" height="1.4" fill="#008000"/><rect x="40.51" y="305.89" width="8.01" height="1.4" fill="#008000"/><rect x="49.66" y="305.89" width="3.43" height="1.4" fill="#008000"/><rect x="54.24" y="305.89" width="5.72" height="1.4" fill="#008000"/><rect x="61.10" y="305.89" width="4.58" height="1.4" fill="#008000"/><rect x="66.82" y="305.89" width="3.43" height="1.4" fill="#008000"/><rect x="71.40" y="305.89" width="5.72" height="1.4" fill="#008000"/><rect x="78.26" y="305.89" width="5.72" height="1.4" fill="#008000"/><rect x="85.12" y="305.89" width="3.43" height="1.4" fill="#008000"/><rect x="89.70" y="305.89" width="4.30" height="1.4" fill="#008000"/><rect x="13.05" y="308.17" width="2.29" height="1.4" fill="#af00db"/><rect x="16.48" y="308.17" width="1.14" height="1.4" fill="#0431fa"/><rect x="17.63" y="308.17" width="26.31" height="1.4" fill="#001080"/><rect x="45.08" y="308.17" width="1.14" height="1.4" fill="#000000"/><rect x="46.23" y="308.17" width="1.14" height="1.4" fill="#000000"/><rect x="48.52" y="308.17" width="16.02" height="1.4" fill="#001080"/><rect x="64.53" y="308.17" width="1.14" height="1.4" fill="#0431fa"/><rect x="65.68" y="308.17" width="1.14" height="1.4" fill="#000000"/><rect x="17.63" y="310.45" width="9.15" height="1.4" fill="#001080"/><rect x="26.78" y="310.45" width="1.14" height="1.4" fill="#319331"/><rect x="27.92" y="310.45" width="6.86" height="1.4" fill="#a31515"/><rect x="34.79" y="310.45" width="1.14" height="1.4" fill="#319331"/><rect x="37.08" y="310.45" width="1.14" height="1.4" fill="#000000"/><rect x="39.36" y="310.45" width="22.88" height="1.4" fill="#001080"/><rect x="62.24" y="310.45" width="1.14" height="1.4" fill="#319331"/><rect x="63.39" y="310.45" width="1.14" height="1.4" fill="#000000"/><rect x="64.53" y="310.45" width="1.14" height="1.4" fill="#098658"/><rect x="65.68" y="310.45" width="1.14" height="1.4" fill="#319331"/><rect x="17.63" y="312.73" width="6.86" height="1.4" fill="#af00db"/><rect x="25.64" y="312.73" width="9.15" height="1.4" fill="#001080"/><rect x="13.05" y="317.29" width="20.59" height="1.4" fill="#001080"/><rect x="34.79" y="317.29" width="1.14" height="1.4" fill="#000000"/><rect x="37.08" y="317.29" width="6.86" height="1.4" fill="#001080"/><rect x="43.94" y="317.29" width="1.14" height="1.4" fill="#319331"/><rect x="45.08" y="317.29" width="25.17" height="1.4" fill="#001080"/><rect x="70.25" y="317.29" width="1.14" height="1.4" fill="#319331"/><rect x="13.05" y="319.57" width="13.73" height="1.4" fill="#001080"/><rect x="27.92" y="319.57" width="1.14" height="1.4" fill="#000000"/><rect x="30.21" y="319.57" width="4.58" height="1.4" fill="#795e26"/><rect x="34.79" y="319.57" width="1.14" height="1.4" fill="#0431fa"/><rect x="35.93" y="319.57" width="22.88" height="1.4" fill="#001080"/><rect x="58.81" y="319.57" width="1.14" height="1.4" fill="#000000"/><rect x="61.10" y="319.57" width="6.86" height="1.4" fill="#0000ff"/><rect x="69.11" y="319.57" width="4.58" height="1.4" fill="#001080"/><rect x="73.68" y="319.57" width="1.14" height="1.4" fill="#000000"/><rect x="75.97" y="319.57" width="8.01" height="1.4" fill="#795e26"/><rect x="83.98" y="319.57" width="1.14" height="1.4" fill="#0431fa"/><rect x="85.12" y="319.57" width="4.58" height="1.4" fill="#001080"/><rect x="89.70" y="319.57" width="1.14" height="1.4" fill="#000000"/><rect x="17.63" y="321.85" width="20.59" height="1.4" fill="#001080"/><rect x="38.22" y="321.85" width="1.14" height="1.4" fill="#000000"/><rect x="40.51" y="321.85" width="11.44" height="1.4" fill="#001080"/><rect x="51.95" y="321.85" width="1.14" height="1.4" fill="#0431fa"/><rect x="53.09" y="321.85" width="1.14" height="1.4" fill="#0431fa"/><rect x="55.38" y="321.85" width="2.29" height="1.4" fill="#0000ff"/><rect x="58.81" y="321.85" width="22.88" height="1.4" fill="#001080"/><rect x="81.69" y="321.85" width="1.14" height="1.4" fill="#319331"/><rect x="82.84" y="321.85" width="1.14" height="1.4" fill="#000000"/><rect x="83.98" y="321.85" width="1.14" height="1.4" fill="#098658"/><rect x="85.12" y="321.85" width="1.14" height="1.4" fill="#319331"/><rect x="13.05" y="326.41" width="1.14" height="1.4" fill="#008000"/><rect x="15.34" y="326.41" width="6.86" height="1.4" fill="#008000"/><rect x="23.35" y="326.41" width="3.43" height="1.4" fill="#008000"/><rect x="27.92" y="326.41" width="9.15" height="1.4" fill="#008000"/><rect x="38.22" y="326.41" width="3.43" height="1.4" fill="#008000"/><rect x="42.80" y="326.41" width="5.72" height="1.4" fill="#008000"/><rect x="49.66" y="326.41" width="6.86" height="1.4" fill="#008000"/><rect x="57.67" y="326.41" width="5.72" height="1.4" fill="#008000"/><rect x="64.53" y="326.41" width="3.43" height="1.4" fill="#008000"/><rect x="69.11" y="326.41" width="5.72" height="1.4" fill="#008000"/><rect x="75.97" y="326.41" width="4.58" height="1.4" fill="#008000"/><rect x="81.69" y="326.41" width="4.58" height="1.4" fill="#008000"/><rect x="13.05" y="328.69" width="6.86" height="1.4" fill="#af00db"/><rect x="21.06" y="328.69" width="1.14" height="1.4" fill="#0431fa"/><rect x="22.20" y="328.69" width="6.86" height="1.4" fill="#a31515"/><rect x="29.07" y="328.69" width="1.14" height="1.4" fill="#000000"/><rect x="31.36" y="328.69" width="13.73" height="1.4" fill="#001080"/><rect x="45.08" y="328.69" width="1.14" height="1.4" fill="#0431fa"/><rect x="8.48" y="333.25" width="6.86" height="1.4" fill="#af00db"/><rect x="16.48" y="333.25" width="1.14" height="1.4" fill="#0431fa"/><rect x="17.63" y="333.25" width="6.86" height="1.4" fill="#a31515"/><rect x="24.49" y="333.25" width="1.14" height="1.4" fill="#000000"/><rect x="26.78" y="333.25" width="10.30" height="1.4" fill="#001080"/><rect x="37.08" y="333.25" width="1.14" height="1.4" fill="#319331"/><rect x="38.22" y="333.25" width="1.14" height="1.4" fill="#000000"/><rect x="39.36" y="333.25" width="1.14" height="1.4" fill="#098658"/><rect x="40.51" y="333.25" width="1.14" height="1.4" fill="#319331"/><rect x="41.65" y="333.25" width="1.14" height="1.4" fill="#0431fa"/></svg>
<div class="a" style="left:1513px;top:181.5px;width:24px;height:660.5px;background:#ffffff;"></div>
<div class="a" style="left:1513px;top:181.5px;width:0.8px;height:660.5px;background:#e3e3e3;"></div>
<div class="a" style="left:1513.9px;top:236.8px;width:22.1px;height:2.3px;background:#1f1f1f;"></div>
<div class="a" style="left:1528.4px;top:351px;width:7.4px;height:9px;background:#c4900f;"></div>
<div class="a" style="left:1528.4px;top:433px;width:7.4px;height:9px;background:#c4900f;"></div>
<div class="a" style="left:63px;top:842px;width:1474px;height:36px;background:#007acc;"></div>
<div class="a" style="left:63px;top:842px;width:56px;height:36px;background:#16825d;"></div>
<svg style="left:63px;top:842px;" width="60" height="36" viewBox="0 0 60 36"><path d="M21.56 13.9 L27.9 20.25 L21.56 26.06 M34.7 8.06 L28.9 14.25 L34.7 20.4" fill="none" stroke="#fff" stroke-width="1.6"/></svg>
<svg style="left:120px;top:842px;" width="40" height="36" viewBox="0 0 40 36"><circle cx="18.4" cy="10.15" r="2.9" fill="none" stroke="#fff" stroke-width="1.6"/><circle cx="18.4" cy="25.4" r="2.9" fill="none" stroke="#fff" stroke-width="1.6"/><circle cx="28" cy="14" r="2.9" fill="none" stroke="#fff" stroke-width="1.6"/><path d="M18.4 13 V22.5" stroke="#fff" stroke-width="1.6"/><path d="M18.4 22 C18.4 19.5 20 19 23 18.6 C26 18.2 27.8 17.5 28 16.9" fill="none" stroke="#fff" stroke-width="1.6"/></svg>
<div class="t" style="left:161.10px;top:849.67px;font-size:20px;color:#ffffff;letter-spacing:0.285px;font-family:'Liberation Sans';-webkit-text-stroke:0.3px #fff;">master*</div>
<svg style="left:258.6px;top:848.5px" width="23.6" height="23.6" viewBox="0 0 16 16"><path fill="#fff" fill-rule="evenodd" d="M2.006 8.267L.78 9.5 0 8.73l2.09-2.07.76.01 2.09 2.12-.76.76-1.167-1.18a5 5 0 0 0 9.4 1.983l.813.597a6.001 6.001 0 0 1-11.22-2.683zm10.99-.466L11.76 6.55l-.76.76 2.09 2.11.76.01 2.09-2.07-.78-.77-1.16 1.15a6.001 6.001 0 0 0-11.11-2.656l.813.598a5.001 5.001 0 0 1 9.288 1.12z"/></svg>
<svg style="left:305px;top:845px;" width="30" height="30" viewBox="0 0 30 30"><circle cx="14.5" cy="14.5" r="9.2" fill="none" stroke="#fff" stroke-width="1.6"/><path d="M10.6 10.6 L18.4 18.4 M18.4 10.6 L10.6 18.4" stroke="#fff" stroke-width="1.5"/></svg>
<div class="t" style="left:337.90px;top:849.67px;font-size:20px;color:#ffffff;letter-spacing:-0.623px;font-family:'Liberation Sans';-webkit-text-stroke:0.3px #fff;">0</div>
<svg style="left:355px;top:848px;" width="22" height="21" viewBox="0 0 22 21"><path d="M10.65 1.6 L20 18.6 H1.3 Z" fill="none" stroke="#fff" stroke-width="1.6" stroke-linejoin="round"/><path d="M10.65 7.2 V13" stroke="#fff" stroke-width="1.6"/><circle cx="10.65" cy="15.6" r="0.95" fill="#fff"/></svg>
<div class="t" style="left:384.30px;top:849.67px;font-size:20px;color:#ffffff;letter-spacing:-1.523px;font-family:'Liberation Sans';-webkit-text-stroke:0.3px #fff;">2</div>
<div class="t" style="left:735.30px;top:849.67px;font-size:20px;color:#ffffff;letter-spacing:-0.329px;font-family:'Liberation Sans';-webkit-text-stroke:0.3px #fff;">Ln 14, Col 17</div>
<div class="t" style="left:877.50px;top:849.67px;font-size:20px;color:#ffffff;letter-spacing:0.117px;font-family:'Liberation Sans';-webkit-text-stroke:0.3px #fff;">Spaces: 4</div>
<div class="t" style="left:995.60px;top:849.67px;font-size:20px;color:#ffffff;letter-spacing:0.388px;font-family:'Liberation Sans';-webkit-text-stroke:0.3px #fff;">UTF-8</div>
<div class="t" style="left:1081.60px;top:849.67px;font-size:20px;color:#ffffff;letter-spacing:-1.47px;font-family:'Liberation Sans';-webkit-text-stroke:0.3px #fff;">LF</div>
<svg style="left:1126px;top:848px;" width="24" height="24" viewBox="0 0 24 24"><path d="M7.6 3.4 C5.8 3.4 5.5 4.3 5.5 5.8 V9.2 C5.5 10.6 4.8 11.4 3.4 11.6 C4.8 11.8 5.5 12.6 5.5 14 V17.6 C5.5 19.1 5.8 20 7.6 20" fill="none" stroke="#fff" stroke-width="1.4"/><path d="M13.4 3.4 C15.2 3.4 15.5 4.3 15.5 5.8 V9 C15.5 10.4 16.2 11.2 17.6 11.4" fill="none" stroke="#fff" stroke-width="1.4"/><circle cx="17.25" cy="17.6" r="4.3" fill="#fff"/></svg>
<div class="t" style="left:1159.80px;top:849.67px;font-size:20px;color:#ffffff;letter-spacing:0.122px;font-family:'Liberation Sans';-webkit-text-stroke:0.3px #fff;">Python</div>
<div class="t" style="left:1250.50px;top:849.67px;font-size:20px;color:#ffffff;letter-spacing:0.284px;font-family:'Liberation Sans';-webkit-text-stroke:0.3px #fff;">3.9.7 (&#x27;env&#x27;: venv)</div>
<svg style="left:1440px;top:848px;" width="24" height="24" viewBox="0 0 24 24"><path d="M7 5.6 V2.1 H21.4 V11.4 H16.6 L14 14" fill="none" stroke="#fff" stroke-width="1.5"/><circle cx="7.7" cy="10.7" r="3.4" fill="none" stroke="#fff" stroke-width="1.5"/><path d="M1.3 21.6 C1.6 17.3 4.2 15.4 7.7 15.4 C11.2 15.4 13.8 17.3 14.1 21.6" fill="none" stroke="#fff" stroke-width="1.5"/></svg>
<svg style="left:1490px;top:847px;" width="22" height="25" viewBox="0 0 22 25"><path d="M10.5 2.4 C6.2 2.4 4.2 5.6 4.2 10 V17.2 L2.4 19.6 H18.6 L16.8 17.2 V10 C16.8 5.6 14.8 2.4 10.5 2.4 Z" fill="none" stroke="#fff" stroke-width="1.5" stroke-linejoin="round"/><path d="M8.3 20.2 C8.5 21.6 9.3 22.4 10.5 22.4 C11.7 22.4 12.5 21.6 12.7 20.2" fill="none" stroke="#fff" stroke-width="1.4"/></svg>
</div></div></body></html>
